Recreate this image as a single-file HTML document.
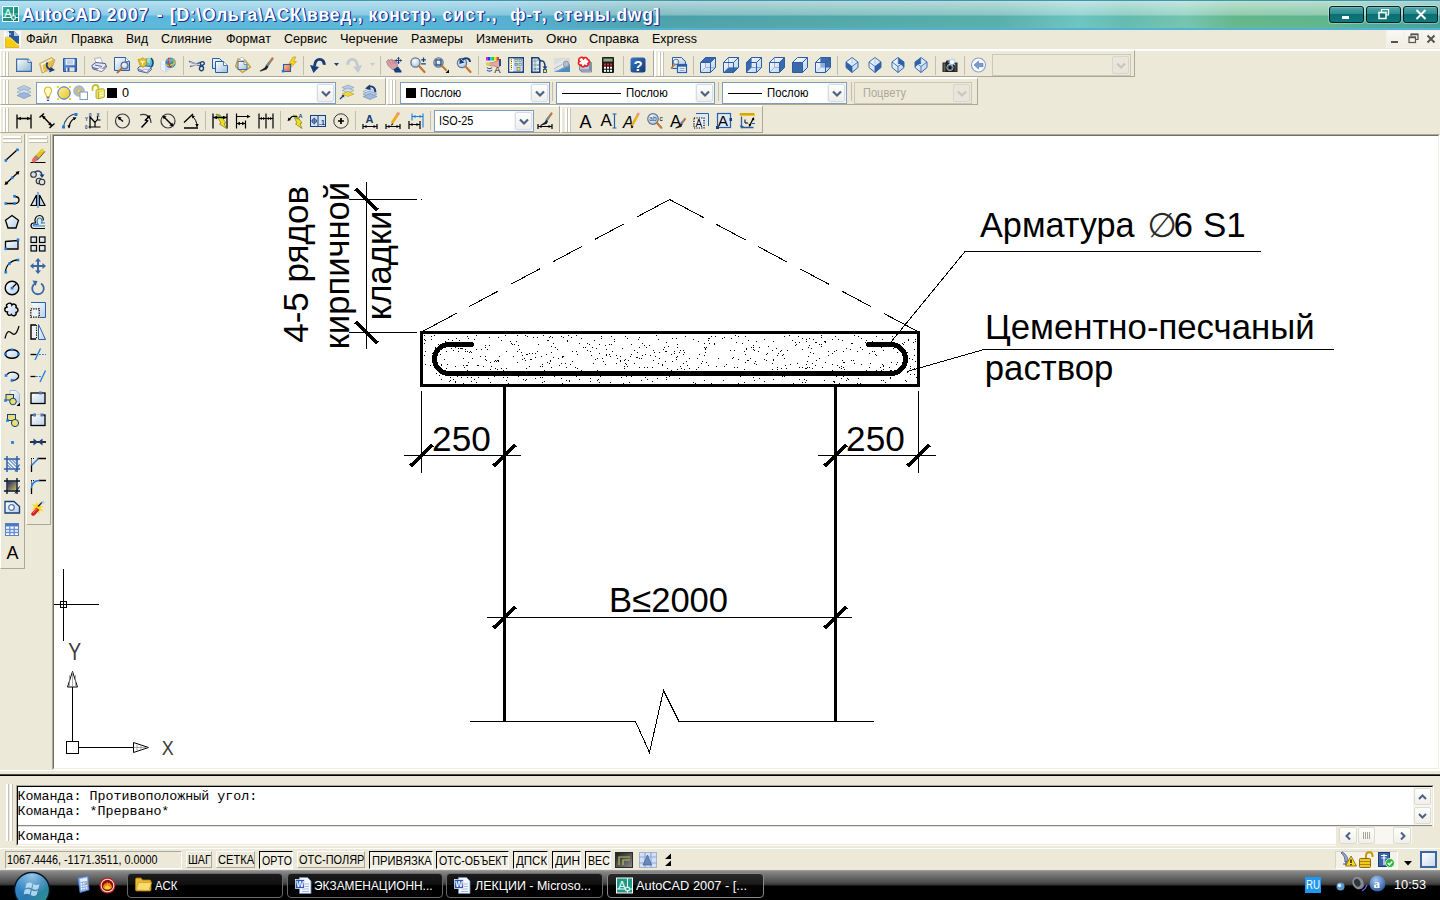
<!DOCTYPE html>
<html lang="ru"><head><meta charset="utf-8"><title>AutoCAD 2007</title><style>
html,body{margin:0;padding:0}
body{width:1440px;height:900px;overflow:hidden;background:#ece9d8;font-family:"Liberation Sans",sans-serif;position:relative;color:#000}
div,span,svg{position:absolute}
.t{white-space:pre;transform-origin:0 0;line-height:1;font-kerning:none}
.i{overflow:visible}
.tb{box-sizing:border-box;border-top:1px solid #fff;border-left:1px solid #fff;border-right:1px solid #aca899;border-bottom:1px solid #aca899}
.gv{width:2px;background:#fff;border-right:1px solid #c5c2b2;box-sizing:content-box}
.gh{height:2px;background:#fff;border-bottom:1px solid #c5c2b2;border-right:1px solid #c5c2b2}
.sep{width:1px;background:#c0bdac}
.combo{box-sizing:border-box;border:1px solid #7f9db9;background:#fff}
.dd{box-sizing:border-box;border:1px solid #d4dcec;border-radius:2px;background:linear-gradient(#fdfdfd,#f0efe8);box-shadow:0 0 0 1px #f4f4f0}
.dis{border-color:#c9c7ba;background:#ece9d8}
.sb{box-sizing:border-box;height:17px;top:851px;border:1px solid;border-color:#fff #aca899 #aca899 #fff}
.sbp{box-sizing:border-box;height:18px;top:851px;border:1px solid;border-color:#000 #fff #fff #000;background:#f3f1e6}
.tk{box-sizing:border-box;top:3px;height:25px;border:1px solid #6a6a6a;border-radius:4px;background:linear-gradient(#1c1c1c 0,#101010 45%,#000 50%,#000 100%)}
</style></head><body>
<svg width="0" height="0" style="position:absolute"><defs>
<linearGradient id="gpg" x1="0" y1="0" x2="1" y2="1"><stop offset="0" stop-color="#fff"/><stop offset="1" stop-color="#9fc0d8"/></linearGradient>
<linearGradient id="gbl" x1="0" y1="0" x2="1" y2="1"><stop offset="0" stop-color="#7fa8e0"/><stop offset="1" stop-color="#1f4f9a"/></linearGradient>
<linearGradient id="gye" x1="0" y1="0" x2="1" y2="1"><stop offset="0" stop-color="#fff3a0"/><stop offset="1" stop-color="#e8c020"/></linearGradient>
<linearGradient id="gfo" x1="0" y1="0" x2="1" y2="1"><stop offset="0" stop-color="#f8e08a"/><stop offset="1" stop-color="#c89a30"/></linearGradient>
<linearGradient id="gcu" x1="0" y1="0" x2="1" y2="1"><stop offset="0" stop-color="#ffffff"/><stop offset="1" stop-color="#b8d0ea"/></linearGradient>
<radialGradient id="ggl" cx="0.4" cy="0.35" r="0.7"><stop offset="0" stop-color="#ffffff"/><stop offset="1" stop-color="#9fc4e8"/></radialGradient>
<linearGradient id="gor" x1="0" y1="0" x2="1" y2="1"><stop offset="0" stop-color="#ffc0a0"/><stop offset="1" stop-color="#e86030"/></linearGradient>
<linearGradient id="ghl" x1="0" y1="0" x2="1" y2="1"><stop offset="0" stop-color="#3a78c8"/><stop offset="1" stop-color="#10386e"/></linearGradient>
</defs></svg>
<div id="titlebar" style="left:0;top:0;width:1440px;height:30px;background:linear-gradient(to bottom,#3d97ad 0,#3d97ad 1px,rgba(255,255,255,.62) 1px,rgba(255,255,255,.55) 2px,rgba(255,255,255,.30) 15px,rgba(255,255,255,0) 16px,rgba(255,255,255,.04) 28px,#4fb2d2 28px,#4fb2d2 30px),linear-gradient(to right,#5cb8dc 0,#58b5d8 350px,#52aed0 520px,#4aa0aa 650px,#50a6a8 800px,#56aeaa 1000px,#6cc4c0 1080px,#62baae 1125px,#72c4b0 1185px,#62b68a 1235px,#5cb48c 1330px,#4aaa9a 1370px,#3f9e98 1440px)">
<svg class="i" style="left:2px;top:6px" width="17" height="16" viewBox="0 0 17 16"><defs><linearGradient id="gap" x1="0" y1="0" x2="1" y2="1"><stop offset="0" stop-color="#2ab8a0"/><stop offset="1" stop-color="#0c7464"/></linearGradient></defs><rect x="0.5" y="0.5" width="16" height="15" fill="url(#gap)" stroke="#fff"/><path d="M1 8h15" stroke="#fff" stroke-width=".8" opacity=".7"/><text x="2.200" y="11" font-size="11" fill="#e8fff6" font-family="Liberation Sans,sans-serif">A</text><path d="M11.500 1v14M1 11.500h15" stroke="#fff" stroke-width="1"/><rect x="9.800" y="9.800" width="3.400" height="3.400" fill="#1f9a88" stroke="#fff" stroke-width=".9"/></svg>
<span class="t" style="left:21.7px;top:6.69px;font-size:17.5px;color:#fff;font-weight:bold;text-shadow:1px 1px 0 #1a2a96,1px 0 0 #1a2a96"><span style="position:static;letter-spacing:0.191px">AutoCAD</span><span style="position:static;display:inline-block;width:5.90px"> </span><span style="position:static;letter-spacing:0.868px">2007</span><span style="position:static;display:inline-block;width:7.60px"> </span><span style="position:static;letter-spacing:1.572px">-</span><span style="position:static;display:inline-block;width:5.90px"> </span><span style="position:static;letter-spacing:0.689px">[D:\Ольга\АСК\введ.,</span><span style="position:static;display:inline-block;width:5.20px"> </span><span style="position:static;letter-spacing:0.647px">констр.</span><span style="position:static;display:inline-block;width:5.60px"> </span><span style="position:static;letter-spacing:1.147px">сист.,</span><span style="position:static;display:inline-block;width:12.40px">  </span><span style="position:static;letter-spacing:0.632px">ф-т,</span><span style="position:static;display:inline-block;width:6.20px"> </span><span style="position:static;letter-spacing:0.747px">стены.dwg]</span></span>
<div style="left:1329px;top:6px;width:35px;height:17px;box-sizing:border-box;border:1px solid #06201f;border-radius:3px;background:linear-gradient(#8cc8c8 0,#4aa4a6 8%,#2f8e90 45%,#0b6e72 50%,#0f777a 100%);box-shadow:0 0 0 1px rgba(255,255,255,.3)"><div style="left:12px;top:9px;width:7px;height:3px;background:#fff"></div></div>
<div style="left:1366px;top:6px;width:35px;height:17px;box-sizing:border-box;border:1px solid #06201f;border-radius:3px;background:linear-gradient(#8cc8c8 0,#4aa4a6 8%,#2f8e90 45%,#0b6e72 50%,#0f777a 100%);box-shadow:0 0 0 1px rgba(255,255,255,.3)"><svg class="i" style="left:11px;top:2px" width="12" height="11" viewBox="0 0 12 11"><path d="M3.500 3v-2.500h7v5.500h-2.500" fill="none" stroke="#fff" stroke-width="1.200"/><rect x="1" y="3.500" width="7" height="6" fill="none" stroke="#fff" stroke-width="1.500"/></svg></div>
<div style="left:1403px;top:6px;width:35px;height:17px;box-sizing:border-box;border:1px solid #06201f;border-radius:3px;background:linear-gradient(#8cc8c8 0,#4aa4a6 8%,#2f8e90 45%,#0b6e72 50%,#0f777a 100%);box-shadow:0 0 0 1px rgba(255,255,255,.3)"><svg class="i" style="left:11px;top:2px" width="12" height="11" viewBox="0 0 12 11"><path d="M1.500 1l9 9M10.500 1l-9 9" stroke="#fff" stroke-width="2"/></svg></div>
</div>
<div id="menubar" style="left:0;top:30px;width:1440px;height:20px">
<div style="left:4px;top:1px;width:17px;height:17px;background:#fbfaf6"></div><svg class="i" style="left:5px;top:1px" width="16" height="17" viewBox="0 0 16 17"><path d="M1 0h8l5 5v7h-13z" fill="#dfe6f2"/><path d="M3 0h6l5 5v8l-9-3z" fill="#2a5a9c"/><path d="M9 0l5 5h-5z" fill="#b8c8e0"/><path d="M0.500 6.500l5 0 8.500 8v2h-13.500z" fill="#f4cc10" stroke="#c89808" stroke-width=".6"/><path d="M1 7l4.500 0 8 7.500" fill="none" stroke="#fff2a0" stroke-width=".8"/><path d="M3.500 0.500v5M1 3h5" stroke="#fff" stroke-width="1"/></svg>
<span class="t " style="left:26.20px;top:1.70px;font-size:13px;transform:scaleX(0.9699);">Файл</span>
<span class="t " style="left:71.20px;top:1.70px;font-size:13px;transform:scaleX(0.9627);">Правка</span>
<span class="t " style="left:126.20px;top:1.70px;font-size:13px;transform:scaleX(0.9354);">Вид</span>
<span class="t " style="left:161.20px;top:1.70px;font-size:13px;transform:scaleX(0.9632);">Слияние</span>
<span class="t " style="left:226.20px;top:1.70px;font-size:13px;transform:scaleX(0.9684);">Формат</span>
<span class="t " style="left:284.20px;top:1.70px;font-size:13px;transform:scaleX(0.9659);">Сервис</span>
<span class="t " style="left:340.20px;top:1.70px;font-size:13px;transform:scaleX(0.9864);">Черчение</span>
<span class="t " style="left:411.20px;top:1.70px;font-size:13px;transform:scaleX(0.9523);">Размеры</span>
<span class="t " style="left:476.20px;top:1.70px;font-size:13px;transform:scaleX(0.9720);">Изменить</span>
<span class="t " style="left:546.20px;top:1.70px;font-size:13px;transform:scaleX(1.0262);">Окно</span>
<span class="t " style="left:589.20px;top:1.70px;font-size:13px;transform:scaleX(0.9859);">Справка</span>
<span class="t " style="left:652.20px;top:1.70px;font-size:13px;transform:scaleX(0.9582);">Express</span>
<div style="left:1387px;top:1px;width:16px;height:16px;background:linear-gradient(#f9f8f3,#f0eee3);box-shadow:0 0 0 1px #f4f2e8"><div style="left:4px;top:10px;width:7px;height:2px;background:#55554c"></div></div>
<div style="left:1405px;top:1px;width:16px;height:16px;background:linear-gradient(#f9f8f3,#f0eee3);box-shadow:0 0 0 1px #f4f2e8"><svg class="i" style="left:3px;top:2px" width="11" height="11" viewBox="0 0 11 11"><path d="M3 3v-2h7v5.500h-2" fill="none" stroke="#55554c" stroke-width="1.200"/><path d="M3 1.500h7" stroke="#55554c" stroke-width="1.500"/><rect x="1" y="4" width="6.500" height="5.500" fill="none" stroke="#55554c" stroke-width="1.200"/><path d="M1 4.500h6.500" stroke="#55554c" stroke-width="1.500"/></svg></div>
<div style="left:1423px;top:1px;width:16px;height:16px;background:linear-gradient(#f9f8f3,#f0eee3);box-shadow:0 0 0 1px #f4f2e8"><svg class="i" style="left:3px;top:3px" width="10" height="10" viewBox="0 0 10 10"><path d="M1.500 1.500l7 7M8.500 1.500l-7 7" stroke="#55554c" stroke-width="2"/></svg></div>
</div>
<div style="left:0;top:49px;width:1440px;height:2px;background:#fff"></div>
<div class="tb" style="left:0;top:50px;width:654px;height:27px"></div>
<div class="gv" style="left:3px;top:52px;height:24px"></div><div class="gv" style="left:6px;top:52px;height:24px"></div>
<svg class="i" style="left:16px;top:57px" width="16" height="16" viewBox="0 0 16 16"><defs><linearGradient id="gnw" x1="0" y1="0" x2="1" y2="1"><stop offset="0" stop-color="#fff"/><stop offset="1" stop-color="#8fb4c6"/></linearGradient></defs><path d="M0.600 2.100h11.400l3.400 3.400v8.900h-14.800z" fill="url(#gnw)" stroke="#3a6cb0" stroke-width="1.200"/><path d="M12 2.100v3.400h3.400" fill="#fff" stroke="#3a6cb0" stroke-width=".9"/></svg>
<svg class="i" style="left:39px;top:57px" width="16" height="16" viewBox="0 0 16 16"><path d="M0.500 6.500l12-6 3.500 2.500-3.500 9-9.500 4z" fill="url(#gfo)" stroke="#c09a38" stroke-width=".7"/><path d="M2 7l10.500-5.200 1 .8-10 5.500 1.500 6.500-1 .6z" fill="#f4f8fc"/><path d="M3.500 8.500l10-5.500-2.500 8.500-6 3z" fill="#e8c050"/><path d="M8.500 5.500c-2 2.500-.5 6 3 7" fill="none" stroke="#173d7a" stroke-width="1.900"/><path d="M10 15.500l6-2.500-4.500-3z" fill="#173d7a"/></svg>
<svg class="i" style="left:62px;top:57px" width="16" height="16" viewBox="0 0 16 16"><defs><linearGradient id="gsv" x1="0" y1="0" x2="1" y2="1"><stop offset="0" stop-color="#6aa0e8"/><stop offset="1" stop-color="#2a5cb0"/></linearGradient></defs><path d="M1.500 1.500h13v13h-13z" fill="url(#gsv)" stroke="#2a56a0"/><rect x="3.500" y="2" width="9" height="6" fill="#eef4fb" stroke="#9ab4d8" stroke-width=".6"/><path d="M5 4h6M5 6h6" stroke="#8aa8cc" stroke-width=".9"/><rect x="4" y="10.500" width="8.500" height="4" fill="#f0f0e8"/><rect x="5.500" y="10.500" width="2" height="4" fill="#2a56a0"/><rect x="9" y="11.500" width="2.500" height="2" fill="#d8dcb0"/></svg>
<div class="sep" style="left:84px;top:56px;height:19px"></div>
<svg class="i" style="left:91px;top:57px" width="16" height="16" viewBox="0 0 16 16"><path d="M3.500 1.500l6-1 2 5.500-6 1.500z" fill="#fff" stroke="#9098b8" stroke-width=".7"/><path d="M0.800 8.500l4-3 9.500 1 1.200 3.500-4.500 4.500-9-2.500z" fill="#e4e8f6" stroke="#404c88" stroke-width=".9"/><path d="M1.500 10.500l9 2.500 4.500-4.500" fill="none" stroke="#404c88" stroke-width=".9"/><path d="M4 8l7 1.500" stroke="#404c88" stroke-width=".8"/><path d="M5.500 13l5 1.500 3-2.500-5-1.200z" fill="#fff" stroke="#7078a8" stroke-width=".6"/></svg>
<svg class="i" style="left:114px;top:57px" width="16" height="16" viewBox="0 0 16 16"><path d="M0.5 0.5h11l4 4v9h-15z" fill="url(#gpg)" stroke="#2a5ea8"/><path d="M11.5 0.5v4h4" fill="#fff" stroke="#2a5ea8" stroke-width=".8"/><circle cx="10.5" cy="8.5" r="3.4" fill="url(#ggl)" stroke="#5a6a90" stroke-width="1.2"/><path d="M8 11.2l-4.5 4.3" stroke="#b8703a" stroke-width="2" stroke-linecap="round"/></svg>
<svg class="i" style="left:137px;top:57px" width="16" height="16" viewBox="0 0 16 16"><circle cx="11.500" cy="5.500" r="4.800" fill="#58b8d8"/><path d="M9 2c2-1.500 4-1.500 5.500 0-1 1.500-2 2-1.500 4-1.500 1-3.500-1.500-4-4z" fill="#a0e0c0"/><path d="M14 1.200c3 2.500 2.500 7 0 9" fill="none" stroke="#10506a" stroke-width="1.600"/><path d="M0.800 11l3.500-2.500 9 1 1.200 3-4 3.500-9-2z" fill="#e4e8f6" stroke="#404c88" stroke-width=".9"/><path d="M1.500 12.500l8.500 2 4-3.500" fill="none" stroke="#404c88" stroke-width=".8"/><path d="M5 14l4.500 1.300 2.500-2-4.500-1z" fill="#fff" stroke="#7078a8" stroke-width=".6"/><path d="M1 2.500l3-.5 1.500-1.500 1.500 1.500 2.500 0 -.5 6-3 2.500-3-2z" fill="#e8c020" stroke="#a88810" stroke-width=".6"/><path d="M4 4l1.500 1.500 2-1.500M5.500 5.500v2" stroke="#fff" stroke-width="1.100" fill="none"/></svg>
<svg class="i" style="left:160px;top:57px" width="16" height="16" viewBox="0 0 16 16"><path d="M0.500 5.500l5 2.500v7.500l-5-3z" fill="#eef2fa" stroke="#c0c8d8" stroke-width=".5"/><path d="M5.500 8l5-2v6.500l-5 3z" fill="#cfd8e8"/><path d="M0.500 5.500l5-2 5 2.500-5 2z" fill="#fafbfd"/><circle cx="10.500" cy="5.800" r="5.300" fill="#2f90c8"/><path d="M7 2.500c2-1.500 5-1.500 7 .5-1 1.500-3 .5-3.500 2.500s-2.500 0-3.500-3z" fill="#58a8d8"/><path d="M5.500 7.500c3 2 8 .5 10-2.500" fill="none" stroke="#e8d020" stroke-width="1.100"/><path d="M9 0.800c-1.500 3-.5 7.500 2 9.800" fill="none" stroke="#e03030" stroke-width="1.200"/><path d="M6 3.500c3-1 7 0 9.500 3" fill="none" stroke="#e89030" stroke-width=".9"/><path d="M13 1.200c2 3 1 7-1 9" fill="none" stroke="#e8d020" stroke-width=".9"/></svg>
<div class="sep" style="left:183px;top:56px;height:19px"></div>
<svg class="i" style="left:189px;top:57px" width="16" height="16" viewBox="0 0 16 16"><path d="M0.500 4.500l11 4.500M1.500 9.500l9.500-4" stroke="#5a6a98" stroke-width="1.500" stroke-linecap="round"/><path d="M1 4.800l7 2.800M2 9.200l6-2.500" stroke="#e8ecf6" stroke-width=".6"/><ellipse cx="13.300" cy="6.500" rx="2" ry="1.700" fill="none" stroke="#173d7a" stroke-width="1.300" transform="rotate(-20 13.300 6.500)"/><ellipse cx="12.500" cy="11.500" rx="2" ry="2.200" fill="none" stroke="#173d7a" stroke-width="1.300" transform="rotate(20 12.500 11.500)"/></svg>
<svg class="i" style="left:212px;top:57px" width="16" height="16" viewBox="0 0 16 16"><path d="M0.5 1.5h7l3 3v7h-10z" fill="url(#gpg)" stroke="#2a5ea8"/><path d="M3.5 4.5h8l4 4v7h-12z" fill="url(#gpg)" stroke="#2a5ea8"/><path d="M11.5 4.5v4h4" fill="#fff" stroke="#2a5ea8" stroke-width=".8"/></svg>
<svg class="i" style="left:235px;top:57px" width="16" height="16" viewBox="0 0 16 16"><path d="M3 2l7 1 5.5 7-8 5.5-7-6z" fill="#f0dc98" stroke="#c09a38" stroke-width="1.2"/><path d="M4.5 1.5l3-1.5 2 2.5-3 1.5z" fill="#fff" stroke="#a0a0a0" stroke-width=".6"/><path d="M3 4.5h6l3 3v5h-9z" fill="url(#gpg)" stroke="#2a5ea8" stroke-width=".9"/><path d="M9 4.5v3h3" fill="#fff" stroke="#2a5ea8" stroke-width=".6"/></svg>
<svg class="i" style="left:258px;top:57px" width="16" height="16" viewBox="0 0 16 16"><path d="M14.5 1.5l-6 8" stroke="#b8784a" stroke-width="2.4" stroke-linecap="round"/><path d="M11.5 5.5l-3 4" stroke="#5a8ac0" stroke-width="2.4"/><path d="M8.8 8.2l-2.3 2.6-5 3.2 1 .5 6-2 2-2.8z" fill="#202020"/></svg>
<svg class="i" style="left:281px;top:57px" width="16" height="16" viewBox="0 0 16 16"><path d="M12 0l3 0-2.5 4.5 3 0-7 7.5 2.5-5.5-3 0z" fill="#f8d820" stroke="#b89010" stroke-width=".6"/><rect x="2.5" y="7.5" width="7" height="7" fill="url(#gor)" stroke="#2a5ea8" stroke-width="1.1"/><rect x="0.8" y="12.8" width="2.6" height="2.6" fill="#1c7ae0"/></svg>
<div class="sep" style="left:303px;top:56px;height:19px"></div>
<svg class="i" style="left:310px;top:57px" width="16" height="16" viewBox="0 0 16 16"><path d="M14 7.500c.5-6-8.500-8-9.500 1.500" fill="none" stroke="#173d7a" stroke-width="2.800"/><path d="M0 8l9 2-5.500 6z" fill="#173d7a"/><path d="M15.700 8c0-3.500-1.500-5.500-4-6.500 1.500 1.500 2 3.500 1.500 6z" fill="#173d7a"/></svg>
<svg class="i" style="left:346px;top:57px" width="16" height="16" viewBox="0 0 16 16"><path d="M2 7.500c-.5-6 8.500-8 9.500 1.500" fill="none" stroke="#c4c8d2" stroke-width="2.800"/><path d="M16 8l-9 2 5.500 6z" fill="#c4c8d2"/><path d="M0.300 8c0-3.500 1.500-5.500 4-6.500-1.500 1.500-2 3.500-1.500 6z" fill="#c4c8d2"/></svg>
<div class="sep" style="left:380px;top:56px;height:19px"></div>
<svg class="i" style="left:386px;top:57px" width="16" height="16" viewBox="0 0 16 16"><path d="M0.500 4.500l2-2 1.500 1 1.500-1.500 2 1.500 1.500-.5 2.500 4.500-1 4.500-4 .5-4.500-4z" fill="#d8a0a8" stroke="#a06878" stroke-width=".7"/><path d="M2.500 3.500l3 4M5.500 2.500l2 4.500M8 3.500l1.500 3.500" stroke="#a87080" stroke-width=".6"/><path d="M7.500 12.500l4.500-3 3.500 4.500v1.500h-6.500z" fill="#173d7a"/><path d="M12.500 0.500v6M9.500 3.500h6" stroke="#173d7a" stroke-width="1"/><path d="M12.500 0l1.500 1.800h-3zM12.500 7l1.500-1.800h-3zM9 3.500l1.800-1.500v3zM16 3.500l-1.800-1.500v3z" fill="#173d7a"/></svg>
<svg class="i" style="left:410px;top:57px" width="16" height="16" viewBox="0 0 16 16"><circle cx="5.500" cy="5.500" r="4.600" fill="url(#ggl)" stroke="#6a7690" stroke-width="1.300"/><path d="M9 9l5.500 6" stroke="#c07838" stroke-width="2.200" stroke-linecap="round"/><path d="M13.500 0.500v4.500M11.200 2.800h4.600M11.200 6.800h4.600" stroke="#173d7a" stroke-width="1.200"/></svg>
<svg class="i" style="left:433px;top:57px" width="16" height="16" viewBox="0 0 16 16"><circle cx="5.500" cy="5.500" r="4.600" fill="url(#ggl)" stroke="#6a7690" stroke-width="1.300"/><rect x="3" y="3" width="5" height="5" fill="none" stroke="#173d7a" stroke-width="1.200"/><path d="M9 9l4 4" stroke="#c07838" stroke-width="2.200" stroke-linecap="round"/><path d="M16 12.500v3.500h-3.500z" fill="#000"/></svg>
<svg class="i" style="left:456px;top:57px" width="16" height="16" viewBox="0 0 16 16"><circle cx="6" cy="6" r="4.600" fill="url(#ggl)" stroke="#6a7690" stroke-width="1.300"/><path d="M9.500 9.500l5 5.500" stroke="#c07838" stroke-width="2.200" stroke-linecap="round"/><path d="M14 5c0-4-5-5-7.500-2" fill="none" stroke="#173d7a" stroke-width="2"/><path d="M3.500 1l0 6 5-1.500z" fill="#173d7a"/></svg>
<div class="sep" style="left:478px;top:56px;height:19px"></div>
<svg class="i" style="left:485px;top:57px" width="16" height="16" viewBox="0 0 16 16"><rect x="1" y="0" width="2" height="3.500" fill="#e020e0"/><rect x="3" y="0" width="2" height="3.500" fill="#3030f0"/><rect x="5" y="0" width="2" height="3.500" fill="#20d0e0"/><rect x="7" y="0" width="2" height="3.500" fill="#20d020"/><rect x="9" y="0" width="2.500" height="3.500" fill="#f0e020"/><rect x="11.500" y="0" width="2.500" height="3.500" fill="#f04020"/><path d="M15 3l-7 2.500-4 .5v2.500l5 .5 4 1.500 2-1z" fill="#e8a8a0" stroke="#a86868" stroke-width=".6"/><rect x="14" y="2" width="2" height="7" fill="#2a4a90"/><rect x="1" y="5.500" width="4" height="3" fill="#d8d048"/><path d="M2 10.500c1 1.500 4 1.500 5 0M2 13c1 1.500 4 1.500 5 0" fill="none" stroke="#3a5aa0" stroke-width="1.200"/><text x="9.300" y="15.800" font-size="9.500" fill="#202020" font-family="Liberation Sans,sans-serif">A</text></svg>
<svg class="i" style="left:508px;top:57px" width="16" height="16" viewBox="0 0 16 16"><rect x="0.800" y="0.800" width="14.400" height="14.400" fill="#dfe9f6" stroke="#173d7a" stroke-width="1.500"/><rect x="1.500" y="1.500" width="3.500" height="13" fill="#fff"/><path d="M3.500 2v12" stroke="#202020" stroke-width=".8" stroke-dasharray="1 1"/><rect x="2.300" y="2.500" width="1.500" height="1.500" fill="#f0d020"/><rect x="2.300" y="5.500" width="1.500" height="1.500" fill="#f0d020"/><rect x="2.300" y="8.500" width="1.500" height="1.500" fill="#f0d020"/><rect x="2.300" y="11.500" width="1.500" height="1.500" fill="#f0d020"/><rect x="6" y="2" width="8.500" height="12" fill="#c9d8ec"/><rect x="7" y="2.500" width="2.200" height="2.200" fill="#f4f080" stroke="#406090" stroke-width=".5"/><rect x="11" y="2.500" width="2.200" height="2.200" fill="#f4f080" stroke="#406090" stroke-width=".5"/><rect x="7" y="6.500" width="2.200" height="2.200" fill="#80e0c0" stroke="#406090" stroke-width=".5"/><rect x="11" y="6.500" width="2.200" height="2.200" fill="#f4f080" stroke="#406090" stroke-width=".5"/><rect x="9" y="10.500" width="3" height="3" fill="#f4e040" stroke="#406090" stroke-width=".5"/></svg>
<svg class="i" style="left:531px;top:57px" width="16" height="16" viewBox="0 0 16 16"><path d="M0.800 0.800h6.500l1.500 2v12.400h-8z" fill="#dfe9f6" stroke="#173d7a" stroke-width="1.500"/><rect x="3" y="3" width="2" height="2" fill="#f4f080" stroke="#406090" stroke-width=".5"/><rect x="3" y="7" width="2" height="2" fill="#f4f080" stroke="#406090" stroke-width=".5"/><rect x="3" y="11" width="2" height="2" fill="#80e0c0" stroke="#406090" stroke-width=".5"/><path d="M6 3h2M6 8h2M6 12h2" stroke="#406090" stroke-width=".8"/><path d="M9 4c4-1 5 2 5 6" fill="none" stroke="#173d7a" stroke-width="1.500"/><path d="M11.500 9.500h5l-2.500 3z" fill="#173d7a"/><rect x="12.500" y="12.500" width="3" height="3" fill="#f4e860" stroke="#173d7a" stroke-width=".8"/></svg>
<svg class="i" style="left:554px;top:57px" width="16" height="16" viewBox="0 0 16 16"><rect x="0" y="1" width="16" height="14" fill="#6a9cc4"/><path d="M0 1h16v6l-16 8z" fill="#d8dce0"/><path d="M0 8l10-5.500 4 1.500v3l-10 6-4-1.500z" fill="#e4e6ea"/><ellipse cx="12" cy="7" rx="2.800" ry="3" fill="#b8bcc4" stroke="#888c98" stroke-width=".8"/><path d="M0 12l8-4.500" stroke="#a0a4b0" stroke-width=".8"/><path d="M3 15l13-6v6z" fill="#4a8cc0"/></svg>
<svg class="i" style="left:577px;top:57px" width="16" height="16" viewBox="0 0 16 16"><path d="M4.500 5.500h10v9.500h-10z" fill="#e8e8f0" stroke="#707890" stroke-width=".8"/><path d="M3.500 4.500h10v9.500h-10z" fill="#d8dcec" stroke="#707890" stroke-width=".8"/><path d="M2.500 3.500h10v9.500h-10z" fill="#b8c8e8" stroke="#707890" stroke-width=".8"/><path d="M3 1c1.500-1.500 3-.5 3.500.5 1-1.500 4-1 4 1 2 0 2.500 3 .5 4 1 2-1.500 3.500-3 2-1 2-4 1.500-4-.5-2.500.5-3.500-2.500-1.500-3.500-1.500-1-.5-3.500.5-3.500z" fill="#fff" stroke="#e82020" stroke-width="1.700"/></svg>
<svg class="i" style="left:600px;top:57px" width="16" height="16" viewBox="0 0 16 16"><rect x="2" y="0" width="12" height="16" rx="1" fill="#181818"/><rect x="3.500" y="1.500" width="9" height="3" fill="#90a888" stroke="#587050" stroke-width=".5"/><rect x="4" y="6.500" width="2" height="2" fill="#f02020"/><rect x="7" y="6.500" width="2" height="2" fill="#f02020"/><rect x="10" y="6.500" width="2" height="2" fill="#f02020"/><rect x="4" y="9.700" width="2" height="2" fill="#fff"/><rect x="7" y="9.700" width="2" height="2" fill="#fff"/><rect x="10" y="9.700" width="2" height="2" fill="#fff"/><rect x="4" y="12.800" width="2" height="2" fill="#fff"/><rect x="7" y="12.800" width="2" height="2" fill="#fff"/><rect x="10" y="12.800" width="2" height="2" fill="#fff"/></svg>
<div class="sep" style="left:623px;top:56px;height:19px"></div>
<svg class="i" style="left:630px;top:57px" width="16" height="16" viewBox="0 0 16 16"><rect x="0.500" y="0.500" width="15" height="15" rx="2.500" fill="url(#ghl)"/><text x="3.600" y="13.600" font-size="15" font-weight="bold" fill="#fff" font-family="Liberation Sans,sans-serif">?</text></svg>
<svg class="i" style="left:334px;top:63px" width="5" height="3" viewBox="0 0 5 3"><path d="M0 0h5l-2.500 3z" fill="#173d7a"/></svg>
<svg class="i" style="left:370px;top:63px" width="5" height="3" viewBox="0 0 5 3"><path d="M0 0h5l-2.500 3z" fill="#c4c8d4"/></svg>
<div class="tb" style="left:654px;top:50px;width:481px;height:27px;border-left-width:2px"></div>
<div class="gv" style="left:658px;top:52px;height:24px"></div><div class="gv" style="left:661px;top:52px;height:24px"></div>
<svg class="i" style="left:671px;top:57px" width="16" height="16" viewBox="0 0 16 16"><path d="M1.500 0.500h9l4 4v7h-13z" fill="url(#gpg)" stroke="#2a5ea8"/><circle cx="5" cy="5" r="2.800" fill="url(#ggl)" stroke="#6a7690" stroke-width="1"/><path d="M3.500 7.500l-3 3.500" stroke="#c07838" stroke-width="1.800" stroke-linecap="round"/><rect x="6.500" y="7.500" width="9" height="8" fill="#e8f0fa" stroke="#2a5ea8" stroke-width="1.200"/><rect x="6.500" y="7.500" width="9" height="2.200" fill="#2a5ea8"/><path d="M8.500 11.500h5M8.500 13.500h5" stroke="#7090c0" stroke-width=".8"/></svg>
<div class="sep" style="left:693px;top:56px;height:19px"></div>
<svg class="i" style="left:700px;top:57px" width="16" height="16" viewBox="0 0 16 16"><path d="M0.500 5.500l5-5h10v10l-5 5h-10z" fill="url(#gcu)"/><path d="M5.500 0.500v10h10M5.500 10.500l-5 5" fill="none" stroke="#8aa8d0" stroke-width=".8"/><path d="M0.500 5.500l5-5h10l-5 5z" fill="#3a6aac"/><path d="M0.500 5.500h10v10h-10zM0.500 5.500l5-5h10l-5 5M15.500 0.500v10l-5 5" fill="none" stroke="#2a5ea8" stroke-width="1" stroke-linejoin="miter"/></svg>
<svg class="i" style="left:723px;top:57px" width="16" height="16" viewBox="0 0 16 16"><path d="M0.500 5.500l5-5h10v10l-5 5h-10z" fill="url(#gcu)"/><path d="M5.500 0.500v10h10M5.500 10.500l-5 5" fill="none" stroke="#8aa8d0" stroke-width=".8"/><path d="M0.500 15.500l5-5h10l-5 5z" fill="#3a6aac"/><path d="M5.500 0.500v10h10M5.500 10.500l-5 5" fill="none" stroke="#7f9cc8" stroke-width=".7"/><path d="M0.500 5.500h10v10h-10zM0.500 5.500l5-5h10l-5 5M15.500 0.500v10l-5 5" fill="none" stroke="#2a5ea8" stroke-width="1" stroke-linejoin="miter"/></svg>
<svg class="i" style="left:746px;top:57px" width="16" height="16" viewBox="0 0 16 16"><path d="M0.500 5.500l5-5h10v10l-5 5h-10z" fill="url(#gcu)"/><path d="M5.500 0.500v10h10M5.500 10.500l-5 5" fill="none" stroke="#8aa8d0" stroke-width=".8"/><path d="M0.500 5.500l5-5v10l-5 5z" fill="#3a6aac"/><path d="M5.500 0.500v10h10M5.500 10.500l-5 5" fill="none" stroke="#7f9cc8" stroke-width=".7"/><path d="M0.500 5.500h10v10h-10zM0.500 5.500l5-5h10l-5 5M15.500 0.500v10l-5 5" fill="none" stroke="#2a5ea8" stroke-width="1" stroke-linejoin="miter"/></svg>
<svg class="i" style="left:769px;top:57px" width="16" height="16" viewBox="0 0 16 16"><path d="M0.500 5.500l5-5h10v10l-5 5h-10z" fill="url(#gcu)"/><path d="M5.500 0.500v10h10M5.500 10.500l-5 5" fill="none" stroke="#8aa8d0" stroke-width=".8"/><path d="M10.500 5.500l5-5v10l-5 5z" fill="#3a6aac"/><path d="M0.500 5.500h10v10h-10zM0.500 5.500l5-5h10l-5 5M15.500 0.500v10l-5 5" fill="none" stroke="#2a5ea8" stroke-width="1" stroke-linejoin="miter"/></svg>
<svg class="i" style="left:792px;top:57px" width="16" height="16" viewBox="0 0 16 16"><path d="M0.500 5.500l5-5h10v10l-5 5h-10z" fill="url(#gcu)"/><path d="M0.500 5.500h10v10h-10z" fill="#3a6aac"/><path d="M0.500 5.500h10v10h-10zM0.500 5.500l5-5h10l-5 5M15.500 0.500v10l-5 5" fill="none" stroke="#2a5ea8" stroke-width="1" stroke-linejoin="miter"/></svg>
<svg class="i" style="left:815px;top:57px" width="16" height="16" viewBox="0 0 16 16"><path d="M0.500 5.500l5-5h10v10l-5 5h-10z" fill="url(#gcu)"/><path d="M5.500 0.500v10h10M5.500 10.500l-5 5" fill="none" stroke="#8aa8d0" stroke-width=".8"/><path d="M5.500 0.500h10v10h-10z" fill="#3a6aac"/><path d="M5.500 0.500v10h10M5.500 10.500l-5 5" fill="none" stroke="#7f9cc8" stroke-width=".7"/><path d="M0.500 5.500h10v10h-10z" fill="#e4eefa" opacity=".5"/><path d="M0.500 5.500h10v10h-10zM0.500 5.500l5-5h10l-5 5M15.500 0.500v10l-5 5" fill="none" stroke="#2a5ea8" stroke-width="1" stroke-linejoin="miter"/></svg>
<div class="sep" style="left:837px;top:56px;height:19px"></div>
<svg class="i" style="left:844.5px;top:57px" width="16" height="16" viewBox="0 0 16 16"><path d="M7 0.500l6 4.500v5.500l-6 5-6-5v-5.500z" fill="url(#gcu)" stroke="#2a5ea8" stroke-width=".9"/><path d="M1 5l6 4.500v6l-6-5z" fill="#2f62a8"/><path d="M1 5l6 4.500 6-4.500M7 9.500v6" fill="none" stroke="#2a5ea8" stroke-width=".8"/><path d="M7 1.500v5" stroke="#9ab4d8" stroke-width=".7"/></svg>
<svg class="i" style="left:867.5px;top:57px" width="16" height="16" viewBox="0 0 16 16"><path d="M7 0.500l6 4.500v5.500l-6 5-6-5v-5.500z" fill="url(#gcu)" stroke="#2a5ea8" stroke-width=".9"/><path d="M13 5l-6 4.500v6l6-5z" fill="#2f62a8"/><path d="M1 5l6 4.500 6-4.500M7 9.500v6" fill="none" stroke="#2a5ea8" stroke-width=".8"/><path d="M7 1.500v5" stroke="#9ab4d8" stroke-width=".7"/></svg>
<svg class="i" style="left:891px;top:57px" width="16" height="16" viewBox="0 0 16 16"><path d="M7 0.500l6 4.500v5.500l-6 5-6-5v-5.500z" fill="url(#gcu)" stroke="#2a5ea8" stroke-width=".9"/><path d="M7 0.500l6 4.500v5.500l-3.500-3.500h-2.500z" fill="#2f62a8"/><path d="M1 5l6 4.500 6-4.500M7 9.500v6" fill="none" stroke="#2a5ea8" stroke-width=".8"/><path d="M7 1.500v5" stroke="#9ab4d8" stroke-width=".7"/></svg>
<svg class="i" style="left:914px;top:57px" width="16" height="16" viewBox="0 0 16 16"><path d="M7 0.500l6 4.500v5.500l-6 5-6-5v-5.500z" fill="url(#gcu)" stroke="#2a5ea8" stroke-width=".9"/><path d="M7 0.500l-6 4.500v5.500l3.500-3.500h2.500z" fill="#2f62a8"/><path d="M1 5l6 4.500 6-4.500M7 9.500v6" fill="none" stroke="#2a5ea8" stroke-width=".8"/><path d="M7 1.500v5" stroke="#9ab4d8" stroke-width=".7"/></svg>
<div class="sep" style="left:935px;top:56px;height:19px"></div>
<svg class="i" style="left:942px;top:57px" width="16" height="16" viewBox="0 0 16 16"><path d="M0.500 5.500h3l1-2h4l1 2h6v9.500h-15z" fill="#202020"/><rect x="1.500" y="6.500" width="2" height="8" fill="#606060"/><rect x="12.500" y="6.500" width="2" height="8" fill="#484848"/><circle cx="8" cy="10.500" r="3.200" fill="#586068" stroke="#b0b8c0" stroke-width=".8"/><circle cx="8" cy="10.500" r="1.500" fill="#101418"/><path d="M10 0l.8 2.700 2.700-1.200-1.200 2.700 2.700.8-2.700.8 1.200 2.700-2.700-1.200-.8 2.700-.8-2.700-2.700 1.200 1.200-2.700-2.700-.8 2.700-.8-1.200-2.700 2.700 1.200z" fill="#a8d4ff"/><circle cx="10" cy="5" r="2" fill="#fff"/></svg>
<div class="sep" style="left:964px;top:56px;height:19px"></div>
<svg class="i" style="left:971px;top:57px" width="16" height="16" viewBox="0 0 16 16"><circle cx="7.500" cy="8" r="7" fill="#fbfcfe" stroke="#8ca4d0" stroke-width="1.200"/><path d="M3 8l4.500-4v2.300h4.500v3.400h-4.500v2.300z" fill="#7a9ac8" stroke="#5a7ab0" stroke-width=".6"/></svg>
<div class="combo dis" style="left:992px;top:54px;width:139px;height:22px"><div class="dd" style="left:119px;top:1px;width:17px;height:18px;background:#e8e6da;border-color:#d8d6ca;box-shadow:none"><svg class="i" style="left:3px;top:5px" width="10" height="8" viewBox="0 0 10 8"><path d="M1 1.500l4 4 4-4" fill="none" stroke="#c9c7ba" stroke-width="2.200"/></svg></div></div>
<div class="tb" style="left:0;top:77px;width:386px;height:28px;border-top-width:2px"></div>
<div class="gv" style="left:3px;top:80px;height:24px"></div><div class="gv" style="left:6px;top:80px;height:24px"></div>
<svg class="i" style="left:16px;top:84px" width="16" height="16" viewBox="0 0 16 16"><path d="M1 4.500l7-3 7 3-7 3z" fill="#b8cce4" stroke="#7f98c0" stroke-width=".6"/><path d="M1 8l7-3 7 3-7 3z" fill="#cfdced" stroke="#7f98c0" stroke-width=".6"/><path d="M1 11.500l7-3 7 3-7 3z" fill="#9fb8dc" stroke="#6f88b8" stroke-width=".6"/></svg>
<div class="combo" style="left:36px;top:82px;width:300px;height:22px"><svg class="i" style="left:6px;top:3px" width="10" height="16" viewBox="0 0 10 16"><path d="M5 1c-3.500 0-5 4.500-2 7.500l.5 2h3l.5-2c3-3 1.500-7.500-2-7.500z" fill="#fffbd0" stroke="#d8b820" stroke-width="1.100"/><path d="M3.500 11.500h3M3.500 13h3" stroke="#7080b0" stroke-width="1.100"/><path d="M4 14.500h2" stroke="#405090" stroke-width="1"/></svg><svg class="i" style="left:20px;top:3px" width="14" height="14" viewBox="0 0 14 14"><rect x="0" y="0" width="2" height="2" fill="#f0d820"/><rect x="12" y="0" width="2" height="2" fill="#f0d820"/><rect x="0" y="12" width="2" height="2" fill="#f0d820"/><rect x="12" y="12" width="2" height="2" fill="#f0d820"/><circle cx="7" cy="7" r="6.200" fill="url(#gye)" stroke="#2a6ac8" stroke-width="1"/></svg><svg class="i" style="left:36px;top:2px" width="15" height="15" viewBox="0 0 15 15"><circle cx="6" cy="6" r="5.800" fill="#9cb8e0"/><circle cx="6" cy="6" r="3.200" fill="none" stroke="#d8c060" stroke-width="1.200"/><path d="M6 0.500v2.500M6 9v2.500M0.500 6h2.500M9 6h2.500M2 2l1.800 1.800M8.200 8.200l1.800 1.800M10 2l-1.800 1.800M3.800 8.200l-1.800 1.800" stroke="#d8c060" stroke-width="1"/><circle cx="6" cy="6" r="1.300" fill="#e8d478"/><rect x="7" y="7" width="7.500" height="7.500" fill="#fff" stroke="#8098c0" stroke-width="1"/></svg><svg class="i" style="left:54px;top:1px" width="15" height="16" viewBox="0 0 15 16"><path d="M1.500 7v-3c0-4 6-4 6 0v1.500" fill="none" stroke="#c8c020" stroke-width="1.800"/><path d="M5 6l6.500-1.500 2 1v7.500l-6 2-2.500-1z" fill="#e8e468" stroke="#a8a018" stroke-width=".8"/><path d="M7.500 7.500v7.500" stroke="#a8a018" stroke-width=".7"/><path d="M8.500 9.500l4-1M8.500 12l4-1" stroke="#fff" stroke-width=".8"/></svg><div style="left:70px;top:5px;width:10px;height:10px;background:#000"></div><span class="t " style="left:85.00px;top:3.92px;font-size:12.5px;transform:scaleX(1.0070);">0</span><div class="dd" style="left:280px;top:1px;width:17px;height:18px;"><svg class="i" style="left:3px;top:5px" width="10" height="8" viewBox="0 0 10 8"><path d="M1 1.500l4 4 4-4" fill="none" stroke="#4d6185" stroke-width="2.200"/></svg></div></div>
<svg class="i" style="left:339px;top:84px" width="16" height="16" viewBox="0 0 16 16"><path d="M3 3.500l6-2.500 6 2.500-6 2.500z" fill="#b8cce4" stroke="#7f98c0" stroke-width=".6"/><path d="M3 6.500l6-2.500 6 2.500-6 2.500z" fill="#cfdced" stroke="#7f98c0" stroke-width=".6"/><path d="M3 10l6-2.500 6 2.500-6 2.500z" fill="#f0d838" stroke="#b8a020" stroke-width=".6"/><path d="M1 15l3.500-3.500" stroke="#173d7a" stroke-width="1.300"/><path d="M2.500 11h2.700v2.700z" fill="#173d7a"/></svg>
<svg class="i" style="left:362px;top:84px" width="16" height="16" viewBox="0 0 16 16"><path d="M1 7.500l7-3 7 3-7 3z" fill="#cfdced" stroke="#7f98c0" stroke-width=".6"/><path d="M1 10l7-3 7 3-7 3z" fill="#b8cce4" stroke="#7f98c0" stroke-width=".6"/><path d="M1 12.500l7-3 7 3-7 3z" fill="#9fb8dc" stroke="#6f88b8" stroke-width=".6"/><path d="M13 8c1-4-3-7-7-5" fill="none" stroke="#173d7a" stroke-width="1.800"/><path d="M3 4.500l5-4 .5 5.500z" fill="#173d7a"/></svg>
<div class="tb" style="left:386px;top:77px;width:592px;height:28px;border-top-width:2px;border-left-width:2px"></div>
<div class="gv" style="left:390px;top:80px;height:24px"></div><div class="gv" style="left:393px;top:80px;height:24px"></div>
<div class="combo" style="left:400px;top:82px;width:150px;height:22px"><div style="left:5px;top:5px;width:10px;height:10px;background:#000"></div><span class="t " style="left:18.80px;top:3.92px;font-size:12.5px;transform:scaleX(0.9017);">Послою</span><div class="dd" style="left:130px;top:1px;width:17px;height:18px;"><svg class="i" style="left:3px;top:5px" width="10" height="8" viewBox="0 0 10 8"><path d="M1 1.500l4 4 4-4" fill="none" stroke="#4d6185" stroke-width="2.200"/></svg></div></div>
<div class="combo" style="left:556px;top:82px;width:159px;height:22px"><div style="left:5px;top:10px;width:59px;height:1px;background:#000"></div><span class="t " style="left:68.50px;top:3.92px;font-size:12.5px;transform:scaleX(0.9104);">Послою</span><div class="dd" style="left:139px;top:1px;width:17px;height:18px;"><svg class="i" style="left:3px;top:5px" width="10" height="8" viewBox="0 0 10 8"><path d="M1 1.500l4 4 4-4" fill="none" stroke="#4d6185" stroke-width="2.200"/></svg></div></div>
<div class="combo" style="left:722px;top:82px;width:125px;height:22px"><div style="left:5px;top:10px;width:34px;height:1px;background:#000"></div><span class="t " style="left:43.70px;top:3.92px;font-size:12.5px;transform:scaleX(0.9060);">Послою</span><div class="dd" style="left:105px;top:1px;width:17px;height:18px;"><svg class="i" style="left:3px;top:5px" width="10" height="8" viewBox="0 0 10 8"><path d="M1 1.500l4 4 4-4" fill="none" stroke="#4d6185" stroke-width="2.200"/></svg></div></div>
<div class="sep" style="left:851px;top:82px;height:19px"></div>
<div class="sep" style="left:552px;top:82px;height:19px"></div>
<div class="sep" style="left:718px;top:82px;height:19px"></div>
<div class="combo dis" style="left:854px;top:82px;width:118px;height:22px"><span class="t " style="left:8.20px;top:3.92px;font-size:12.5px;color:#aca899;transform:scaleX(0.8836);">Поцвету</span><div class="dd" style="left:98px;top:1px;width:17px;height:18px;background:#e8e6da;border-color:#d8d6ca;box-shadow:none"><svg class="i" style="left:3px;top:5px" width="10" height="8" viewBox="0 0 10 8"><path d="M1 1.500l4 4 4-4" fill="none" stroke="#c9c7ba" stroke-width="2.200"/></svg></div></div>
<div class="tb" style="left:0;top:105px;width:560px;height:28px;border-top-width:2px"></div>
<div class="gv" style="left:3px;top:108px;height:24px"></div><div class="gv" style="left:6px;top:108px;height:24px"></div>
<svg class="i" style="left:16px;top:113px" width="16" height="16" viewBox="0 0 16 16"><path d="M1 1.500v14M15 1.500v14M1.500 5.500h13" stroke="#000" stroke-width="1.300" fill="none"/><path d="M1.500 5.500l3.500-1.800v3.600zM14.500 5.500l-3.500-1.800v3.600z" fill="#000"/></svg>
<svg class="i" style="left:39px;top:113px" width="16" height="16" viewBox="0 0 16 16"><path d="M0.500 4.500l4.500-4M10.500 15l5-4.500M3 2.500l10 10.500" stroke="#000" stroke-width="1.400" fill="none"/><path d="M3 2.500l3.800 1.200-2.500 2.500zM13 13l-3.800-1.200 2.500-2.500z" fill="#000"/></svg>
<svg class="i" style="left:62px;top:113px" width="16" height="16" viewBox="0 0 16 16"><path d="M1.500 14c.5-6 5-12 12-13" fill="none" stroke="#3a4660" stroke-width="1.200"/><path d="M7 14.500c.5-4.500 2.500-8 6.500-9.500" fill="none" stroke="#000" stroke-width="1.300"/><path d="M14.500 4.500l-3.800-.3 1.600 3zM7 15.500l-1.600-3.300 3.200.3z" fill="#000"/><rect x="12.500" y="0" width="3" height="3" fill="#1c7ae0"/><rect x="0" y="12.500" width="3" height="3" fill="#1c7ae0"/></svg>
<svg class="i" style="left:85px;top:113px" width="16" height="16" viewBox="0 0 16 16"><path d="M5 3v12.500M3.500 14h12M10 14v-4.500l2-2.500h3.500M5.500 4.500l5 5.500M12.500 3v4" stroke="#000" stroke-width="1.200" fill="none"/><text x="4" y="3.500" font-size="4.500" font-weight="bold" fill="#173d7a" font-family="Liberation Sans,sans-serif">0</text><text x="11.500" y="3.500" font-size="4.500" font-weight="bold" fill="#173d7a" font-family="Liberation Sans,sans-serif">X</text><text x="0" y="8" font-size="4.500" font-weight="bold" fill="#173d7a" font-family="Liberation Sans,sans-serif">Y</text><text x="0" y="15.500" font-size="4.500" font-weight="bold" fill="#173d7a" font-family="Liberation Sans,sans-serif">0</text></svg>
<div class="sep" style="left:107px;top:111px;height:19px"></div>
<svg class="i" style="left:114px;top:113px" width="16" height="16" viewBox="0 0 16 16"><circle cx="8.500" cy="8" r="7" fill="none" stroke="#3a3a3a" stroke-width="1.200"/><path d="M9 8.500l-4-3.500" stroke="#000" stroke-width="1.300"/><path d="M3.500 3.500l4 1-2.500 2.800z" fill="#000"/></svg>
<svg class="i" style="left:137px;top:113px" width="16" height="16" viewBox="0 0 16 16"><path d="M3 2c5-2 11 1 11 8" fill="none" stroke="#3a3a3a" stroke-width="1.200"/><path d="M12 3.500l-3.500 3.500 2 1-6 6.500" fill="none" stroke="#000" stroke-width="1.500"/><path d="M13.500 2l-1 4-2.800-2.500z" fill="#000"/></svg>
<svg class="i" style="left:160px;top:113px" width="16" height="16" viewBox="0 0 16 16"><circle cx="8" cy="8" r="7" fill="none" stroke="#3a3a3a" stroke-width="1.200"/><path d="M4 4l8 8" stroke="#000" stroke-width="1.400"/><path d="M2.500 2.500l4 1-2.800 2.800zM13.500 13.500l-4-1 2.800-2.800z" fill="#000"/></svg>
<svg class="i" style="left:183px;top:113px" width="16" height="16" viewBox="0 0 16 16"><path d="M1 15h14M1 9.500l9-8.500" stroke="#000" stroke-width="1.300" fill="none"/><path d="M9 3c3 2.500 5 6 5 10.500" fill="none" stroke="#000" stroke-width="1"/><path d="M8.500 2l3.500 1.200-2.500 2.200zM14 14.500l-1.700-3.500h3.400z" fill="#000"/></svg>
<div class="sep" style="left:205px;top:111px;height:19px"></div>
<svg class="i" style="left:212px;top:113px" width="16" height="16" viewBox="0 0 16 16"><path d="M1 0.500v15M15 0.500v15M1.500 4.500h13" stroke="#000" stroke-width="1.300" fill="none"/><path d="M1.500 4.500l3.500-1.800v3.600zM14.500 4.500l-3.500-1.800v3.600z" fill="#000"/><path d="M4 1l4 1 6 8-2 .5 2.500 5-7-4.500 1.500-1z" fill="#f0e020" stroke="#787820" stroke-width=".7"/><path d="M4 1l4 1 3 4-4-1z" fill="#88a838"/><path d="M3 4.500h10" stroke="#000" stroke-width="1.200"/></svg>
<svg class="i" style="left:235px;top:113px" width="16" height="16" viewBox="0 0 16 16"><path d="M1.500 0.500v15M10.500 7.500v8M1.500 3.500h13M1.500 10.500h9" stroke="#000" stroke-width="1.200" fill="none"/><path d="M15.500 3.500l-3.500-1.700v3.400zM10.500 10.500l-3.500-1.700v3.400zM1.500 10.500l3.500-1.700v3.400z" fill="#000"/></svg>
<svg class="i" style="left:258px;top:113px" width="16" height="16" viewBox="0 0 16 16"><path d="M1 0.500v15M8 0.500v15M15 0.500v15M1 5.500h14" stroke="#000" stroke-width="1.200" fill="none"/><path d="M1.500 5.500l2.500-1.500v3zM7.500 5.500l-2.500-1.500v3zM8.500 5.500l2.500-1.500v3zM14.500 5.500l-2.500-1.500v3z" fill="#000"/></svg>
<div class="sep" style="left:280px;top:111px;height:19px"></div>
<svg class="i" style="left:287px;top:113px" width="16" height="16" viewBox="0 0 16 16"><path d="M6 2l4 1 5 7-2 .5 2 5-6.500-4.500 1.500-1z" fill="#f0e020" stroke="#787820" stroke-width=".7"/><path d="M6 2l4 1 3 4-4-1z" fill="#88a838"/><path d="M10 3.500h-5l-3.500 3.500" fill="none" stroke="#000" stroke-width="1.200"/><path d="M0.500 8l1-3.500 2.500 2.500z" fill="#000"/><text x="11.500" y="4.500" font-size="5.500" font-weight="bold" fill="#173d7a" font-family="Liberation Sans,sans-serif">A</text></svg>
<svg class="i" style="left:310px;top:113px" width="16" height="16" viewBox="0 0 16 16"><rect x="0.500" y="2.500" width="15" height="11" fill="#d4e4f6" stroke="#173d7a" stroke-width="1"/><path d="M8 2.500v11" stroke="#173d7a" stroke-width="1"/><circle cx="4.200" cy="8" r="2.200" fill="none" stroke="#173d7a" stroke-width=".9"/><path d="M4.200 4.500v7M1.500 8h5.500" stroke="#173d7a" stroke-width=".8"/><text x="9" y="11.500" font-size="7" font-weight="bold" fill="#173d7a" font-family="Liberation Sans,sans-serif">.1</text></svg>
<svg class="i" style="left:333px;top:113px" width="16" height="16" viewBox="0 0 16 16"><circle cx="8" cy="8" r="7.200" fill="none" stroke="#3a3a3a" stroke-width="1"/><path d="M8 5v6M5 8h6" stroke="#000" stroke-width="1.700"/></svg>
<div class="sep" style="left:355px;top:111px;height:19px"></div>
<svg class="i" style="left:362px;top:113px" width="16" height="16" viewBox="0 0 16 16"><path d="M1 11v5M15 11v5M1.500 13.500h13" stroke="#000" stroke-width="1.200" fill="none"/><path d="M1.500 13.500l3-1.600v3.200zM14.500 13.500l-3-1.600v3.200z" fill="#000"/><text x="3.500" y="9.500" font-size="11" font-weight="bold" fill="#173d7a" font-family="Liberation Sans,sans-serif">A</text></svg>
<svg class="i" style="left:385px;top:113px" width="16" height="16" viewBox="0 0 16 16"><path d="M1 11v5M15 11v5M1.500 13.500h13" stroke="#000" stroke-width="1.200" fill="none"/><path d="M1.500 13.500l3-1.600v3.200zM14.500 13.500l-3-1.600v3.200z" fill="#000"/><path d="M13 1l-6 9" stroke="#e8b020" stroke-width="3"/><path d="M7 10l-1.300 3 2.800-1.800z" fill="#302010"/><path d="M14 -.5l-1.500 2.200" stroke="#f09090" stroke-width="3"/></svg>
<svg class="i" style="left:408px;top:113px" width="16" height="16" viewBox="0 0 16 16"><path d="M1 8v8M12 8v8M1.500 11.500h10" stroke="#000" stroke-width="1.200" fill="none"/><path d="M1.500 11.500l3-1.600v3.200zM11.500 11.500l-3-1.600v3.200z" fill="#000"/><path d="M4 0.500v7M15 0.500v14M4.500 3.500h10" stroke="#1c7ae0" stroke-width="1.100" fill="none"/><path d="M4.500 3.500l3-1.600v3.200zM14.500 3.500l-3-1.600v3.200z" fill="#1c7ae0"/></svg>
<div class="sep" style="left:430px;top:111px;height:19px"></div>
<svg class="i" style="left:537px;top:113px" width="16" height="16" viewBox="0 0 16 16"><path d="M1 11v5M15 11v5M1.500 13.500h13" stroke="#000" stroke-width="1.200" fill="none"/><path d="M1.500 13.500l3-1.600v3.200zM14.500 13.500l-3-1.600v3.200z" fill="#000"/><path d="M14.500 0.500l-5 7" stroke="#b8784a" stroke-width="2.200" stroke-linecap="round"/><path d="M11.500 4.500l-2 3" stroke="#5a8ac0" stroke-width="2.200"/><path d="M9.500 7l-2 2.300-4 2.700 1 .5 5-1.500 1.500-2.500z" fill="#202020"/></svg>
<div class="combo" style="left:434px;top:110px;width:100px;height:22px"><span class="t " style="left:3.80px;top:3.92px;font-size:12.5px;transform:scaleX(0.8662);">ISO-25</span><div class="dd" style="left:80px;top:1px;width:17px;height:18px;"><svg class="i" style="left:3px;top:5px" width="10" height="8" viewBox="0 0 10 8"><path d="M1 1.500l4 4 4-4" fill="none" stroke="#4d6185" stroke-width="2.200"/></svg></div></div>
<div class="tb" style="left:560px;top:105px;width:203px;height:28px;border-top-width:2px;border-left-width:2px"></div>
<div class="gv" style="left:565px;top:108px;height:24px"></div><div class="gv" style="left:568px;top:108px;height:24px"></div>
<svg class="i" style="left:578px;top:113px" width="16" height="16" viewBox="0 0 16 16"><text x="1.5" y="14.5" font-size="18" fill="#000" font-family="Liberation Sans,sans-serif" >A</text></svg>
<svg class="i" style="left:601px;top:113px" width="16" height="16" viewBox="0 0 16 16"><text x="-0.5" y="13" font-size="17" fill="#000" font-family="Liberation Sans,sans-serif" >A</text><path d="M13.500 1v14M11.500 1h4M11.500 15h4" stroke="#2a5ea8" stroke-width="1.200" fill="none"/></svg>
<svg class="i" style="left:624px;top:113px" width="16" height="16" viewBox="0 0 16 16"><text x="-1" y="15" font-size="16" fill="#000" font-family="Liberation Sans,sans-serif" font-style="italic">A</text><path d="M14 1.500l-6 11" stroke="#e8b020" stroke-width="2.600"/><path d="M8 12.500l-1 3 2.500-1.800z" fill="#302010"/><path d="M14.800 0l-1.200 2.200" stroke="#f09090" stroke-width="2.600"/></svg>
<svg class="i" style="left:647px;top:113px" width="16" height="16" viewBox="0 0 16 16"><circle cx="6" cy="6" r="5.300" fill="url(#ggl)" stroke="#6a7690" stroke-width="1.200"/><text x="2.300" y="8" font-size="6.500" fill="#173d7a" font-family="Liberation Sans,sans-serif">ab</text><path d="M9.800 9.800l4.500 5" stroke="#c07838" stroke-width="2.200" stroke-linecap="round"/><text x="12.500" y="8" font-size="6.500" fill="#000" font-family="Liberation Sans,sans-serif">c</text></svg>
<svg class="i" style="left:670px;top:113px" width="16" height="16" viewBox="0 0 16 16"><text x="0" y="14" font-size="17" fill="#000" font-family="Liberation Sans,sans-serif" >A</text><path d="M15 6l-4 5" stroke="#b8784a" stroke-width="2.200" stroke-linecap="round"/><path d="M12.500 9l-1.500 2" stroke="#5a8ac0" stroke-width="2.200"/><path d="M11 10.500l-2 2-4 2.500 1 .5 5-1.500 1.500-2.500z" fill="#202020"/></svg>
<svg class="i" style="left:693px;top:113px" width="16" height="16" viewBox="0 0 16 16"><path d="M3 0.500h12.500v12.500" fill="#dfe9f6" stroke="#2a5ea8" stroke-width="1"/><rect x="1" y="5" width="10" height="10" fill="#eef3fa" stroke="#000" stroke-width="1.200" stroke-dasharray="1.200 1.200"/><text x="2.500" y="14" font-size="10" fill="#000" font-family="Liberation Sans,sans-serif">A</text></svg>
<svg class="i" style="left:716px;top:113px" width="16" height="16" viewBox="0 0 16 16"><rect x="1.500" y="0.500" width="13" height="14" fill="#dfe9f6" stroke="#2a5ea8" stroke-width="1.200"/><text x="2" y="13" font-size="15" fill="#000" font-family="Liberation Sans,sans-serif" >A</text><rect x="0" y="13" width="3" height="3" fill="#173d7a"/><rect x="13.500" y="5" width="2.500" height="3" fill="#173d7a"/></svg>
<svg class="i" style="left:739px;top:113px" width="16" height="16" viewBox="0 0 16 16"><rect x="0.500" y="0" width="15.500" height="3" fill="#f0c818"/><path d="M2 0v2M4 0v2M6 0v2M8 0v2M10 0v2M12 0v2M14 0v2" stroke="#806000" stroke-width=".6"/><path d="M2.500 3.500v11h12" fill="none" stroke="#2a5ea8" stroke-width="1.300"/><path d="M0.500 12.500l2 3 2.500-2.500z" fill="#2a5ea8"/><path d="M6 6.500v3.500h3" fill="none" stroke="#000" stroke-width="1"/><path d="M14.500 5l-4 8" stroke="#000" stroke-width="1.300"/><path d="M15 4l.3 3.500-2.700-1.300zM10 14l-.3-3.500 2.700 1.300z" fill="#000"/><path d="M13 10.500h3" stroke="#2a5ea8" stroke-width="1"/></svg>
<div class="tb" style="left:0;top:134px;width:25px;height:435px;border-top:none"></div>
<div class="gh" style="left:3px;top:136px;width:18px"></div><div class="gh" style="left:3px;top:140px;width:18px"></div>
<svg class="i" style="left:4px;top:148px" width="16" height="16" viewBox="0 0 16 16"><path d="M1.500 12.500l11.500-10.500" stroke="#000" stroke-width="1.300"/><rect x="0.5" y="11.2" width="2.6" height="2.6" fill="#1c7ae0"/><rect x="12.2" y="0.5" width="2.6" height="2.6" fill="#1c7ae0"/></svg>
<svg class="i" style="left:4px;top:170px" width="16" height="16" viewBox="0 0 16 16"><path d="M1.500 14l13-12" stroke="#000" stroke-width="1.300"/><path d="M0.500 15l1.200-4 2.700 2.900zM15.500 1l-1.200 4-2.700-2.900z" fill="#000"/><rect x="6.8999999999999995" y="6.5" width="2.6" height="2.6" fill="#1c7ae0"/></svg>
<svg class="i" style="left:4px;top:192px" width="16" height="16" viewBox="0 0 16 16"><path d="M1.500 11.500h9c6 0 6-7 0-7" fill="none" stroke="#000" stroke-width="1.300"/><rect x="0.5" y="10.2" width="2.6" height="2.6" fill="#1c7ae0"/><rect x="9.2" y="10.2" width="2.6" height="2.6" fill="#1c7ae0"/><rect x="9.2" y="2.9000000000000004" width="2.6" height="2.6" fill="#1c7ae0"/></svg>
<svg class="i" style="left:4px;top:214px" width="16" height="16" viewBox="0 0 16 16"><path d="M8 1.500l6.500 4.800-2.500 7.700h-8l-2.500-7.700z" fill="url(#gcu)" stroke="#000" stroke-width="1.300"/></svg>
<svg class="i" style="left:4px;top:236px" width="16" height="16" viewBox="0 0 16 16"><path d="M1.500 5.500l12.500-1v8.500h-12.500z" fill="url(#gcu)" stroke="#000" stroke-width="1.300"/><rect x="12.7" y="2.5" width="2.6" height="2.6" fill="#1c7ae0"/><rect x="0.5" y="11.5" width="2.6" height="2.6" fill="#1c7ae0"/></svg>
<svg class="i" style="left:4px;top:258px" width="16" height="16" viewBox="0 0 16 16"><path d="M1.500 14.500c0-7 5.500-12.500 12.500-12.500" fill="none" stroke="#000" stroke-width="1.300"/><rect x="0.5" y="12.899999999999999" width="2.6" height="2.6" fill="#1c7ae0"/><rect x="4.2" y="4.2" width="2.6" height="2.6" fill="#1c7ae0"/><rect x="12.7" y="0.7" width="2.6" height="2.6" fill="#1c7ae0"/></svg>
<svg class="i" style="left:4px;top:280px" width="16" height="16" viewBox="0 0 16 16"><circle cx="8" cy="8" r="6.800" fill="url(#gcu)" stroke="#000" stroke-width="1.400"/><path d="M8 8l5-5" stroke="#000" stroke-width="1.200"/><rect x="6.7" y="6.8999999999999995" width="2.6" height="2.6" fill="#1c7ae0"/></svg>
<svg class="i" style="left:4px;top:302px" width="16" height="16" viewBox="0 0 16 16"><path d="M3 2.500c2-2.500 5-1 5 .5 1.500-2 5-.5 4 2.500 3 1 2.500 4.500 0 5 1 3-3 4.500-4.500 2-2 2-5 0-4-2.500-3.500 0-3.500-4.500-.5-5-1-1.500-.5-2.500 0-2.500z" fill="url(#gcu)" stroke="#000" stroke-width="1.400"/></svg>
<svg class="i" style="left:4px;top:324px" width="16" height="16" viewBox="0 0 16 16"><path d="M1 14.500c2-8 4-8 6.500-5.500s5 2 7.500-7" fill="none" stroke="#000" stroke-width="1.200"/></svg>
<svg class="i" style="left:4px;top:346px" width="16" height="16" viewBox="0 0 16 16"><ellipse cx="8" cy="8" rx="6.800" ry="4.300" fill="url(#gcu)" stroke="#000" stroke-width="1.400"/><rect x="0.19999999999999996" y="6.7" width="2.6" height="2.6" fill="#1c7ae0"/><rect x="13.2" y="6.7" width="2.6" height="2.6" fill="#1c7ae0"/><rect x="6.7" y="2.5" width="2.6" height="2.6" fill="#1c7ae0"/></svg>
<svg class="i" style="left:4px;top:368px" width="16" height="16" viewBox="0 0 16 16"><path d="M3 6.500c3-4 13-2.500 11.500 2.500-1 3-5 4-7.500 3" fill="url(#gcu)" stroke="#000" stroke-width="1.300"/><rect x="0.7" y="6.2" width="2.6" height="2.6" fill="#1c7ae0"/><rect x="6.7" y="11.2" width="2.6" height="2.6" fill="#1c7ae0"/></svg>
<svg class="i" style="left:4px;top:390px" width="16" height="16" viewBox="0 0 16 16"><path d="M6 0.500h6l3.500 3.500v8h-9.500z" fill="url(#gcu)" stroke="#9ab0d0" stroke-width=".8"/><rect x="2" y="4.500" width="7.500" height="5.500" fill="#e8e070" stroke="#173d7a" stroke-width="1"/><circle cx="9" cy="11.500" r="3.300" fill="#e8e070" stroke="#173d7a" stroke-width="1"/><rect x="0.19999999999999996" y="9.2" width="2.6" height="2.6" fill="#1c7ae0"/><path d="M16 12.500v3.500h-3.500z" fill="#000"/></svg>
<svg class="i" style="left:4px;top:412px" width="16" height="16" viewBox="0 0 16 16"><rect x="3.500" y="2.500" width="8" height="6" fill="#e8e070" stroke="#173d7a" stroke-width="1"/><circle cx="11" cy="11" r="3.600" fill="#e8e070" stroke="#173d7a" stroke-width="1"/><rect x="2.2" y="7.2" width="2.6" height="2.6" fill="#1c7ae0"/></svg>
<svg class="i" style="left:4px;top:434px" width="16" height="16" viewBox="0 0 16 16"><rect x="7.1" y="7.1" width="2.8" height="2.8" fill="#1c7ae0"/></svg>
<svg class="i" style="left:4px;top:456px" width="16" height="16" viewBox="0 0 16 16"><rect x="3.500" y="3.500" width="9" height="9" fill="#eaf0fa"/><path d="M3.500 6l6.500 6.500M3.500 9l3.500 3.500M5 3.500l7.500 7.500M8 3.500l4.500 4.500M11 3.500l1.500 1.500" stroke="#2a5ea8" stroke-width="1"/><path d="M3 0v16M13 0v16M0 3h16M0 13h16" stroke="#2a5ea8" stroke-width="1.500"/><path d="M11 15.500l4.500-7" stroke="#2a5ea8" stroke-width="1.200"/></svg>
<svg class="i" style="left:4px;top:478px" width="16" height="16" viewBox="0 0 16 16"><defs><linearGradient id="ggr" x1="0" y1="0" x2="1" y2="1"><stop offset="0" stop-color="#202860"/><stop offset="1" stop-color="#c8c060"/></linearGradient></defs><rect x="3.500" y="3.500" width="9" height="9" fill="url(#ggr)"/><path d="M3 0v16M13 0v16M0 3h16M0 13h16" stroke="#0c1430" stroke-width="1.400"/><path d="M11 15.500l4.500-7" stroke="#0c1430" stroke-width="1"/></svg>
<svg class="i" style="left:4px;top:500px" width="16" height="16" viewBox="0 0 16 16"><path d="M1 1.500h9l5.500 5v6.500h-14.500z" fill="url(#gcu)" stroke="#173d7a" stroke-width="1.300"/><circle cx="7.500" cy="7.500" r="2.800" fill="#fff" stroke="#5a78a8" stroke-width="1.300"/></svg>
<svg class="i" style="left:4px;top:522px" width="16" height="16" viewBox="0 0 16 16"><rect x="1.500" y="1.500" width="13" height="12" fill="#fff" stroke="#5a80c0" stroke-width="1"/><rect x="1.500" y="1.500" width="13" height="3" fill="#4a7ad0"/><path d="M1.500 7.500h13M1.500 10.500h13M5.800 4.500v9M10.200 4.500v9" stroke="#6a90d0" stroke-width="1.400"/></svg>
<svg class="i" style="left:4px;top:544px" width="16" height="16" viewBox="0 0 16 16"><text x="2.5" y="14.5" font-size="18" fill="#000" font-family="Liberation Sans,sans-serif" >A</text></svg>
<div class="tb" style="left:26px;top:134px;width:25px;height:391px;border-top:none"></div>
<div class="gh" style="left:29px;top:136px;width:18px"></div><div class="gh" style="left:29px;top:140px;width:18px"></div>
<svg class="i" style="left:30px;top:148px" width="16" height="16" viewBox="0 0 16 16"><path d="M0.500 14.500h15" stroke="#000" stroke-width="1"/><path d="M13.500 2l-9 9.500" stroke="#e8c020" stroke-width="4.200"/><path d="M14.500 0.500l-3.500 3.500" stroke="#f0e080" stroke-width="1"/><path d="M7.500 8.500l-2.200 2.500" stroke="#58a0a0" stroke-width="4.200"/><path d="M5.500 10.500l-1.500 1.800" stroke="#e86868" stroke-width="4.200" stroke-linecap="round"/><path d="M15 3.500l-8 9" stroke="#383838" stroke-width=".8"/></svg>
<svg class="i" style="left:30px;top:170px" width="16" height="16" viewBox="0 0 16 16"><circle cx="3.500" cy="4.500" r="2.800" fill="#d8e0ec" stroke="#303030" stroke-width="1.100"/><circle cx="9" cy="11" r="2.800" fill="#d8e0ec" stroke="#303030" stroke-width="1.100"/><circle cx="12" cy="12" r="2.800" fill="#d8e0ec" stroke="#303030" stroke-width="1.100"/><path d="M4.500 2.500c3-3 7-1.500 7.500 2.500" fill="none" stroke="#173d7a" stroke-width="1.500"/><path d="M9.500 4.500h5l-2.500 3.500z" fill="#173d7a"/></svg>
<svg class="i" style="left:30px;top:192px" width="16" height="16" viewBox="0 0 16 16"><path d="M6.500 3v10.500h-5.500zM9.500 3v10.500h5.500z" fill="url(#gcu)" stroke="#000" stroke-width="1.200"/><path d="M8 0v16" stroke="#1c7ae0" stroke-width="1.100"/></svg>
<svg class="i" style="left:30px;top:214px" width="16" height="16" viewBox="0 0 16 16"><path d="M15 14.500h-11c-4 0-4-5.500 0-5.500h1.500c-2-4 1-7.500 4-7.500s4.500 3 3.500 5" fill="none" stroke="#000" stroke-width="1.200"/><path d="M15 12h-10.500c-1.500 0-1.500-1.500 0-1.500h3.500c-2-3.500-.5-6.500 1.500-6.500 2.500 0 3 3 2 5h3.500" fill="none" stroke="#1c7ae0" stroke-width="1.200"/></svg>
<svg class="i" style="left:30px;top:236px" width="16" height="16" viewBox="0 0 16 16"><rect x="1" y="1" width="5.500" height="5.500" fill="url(#gcu)" stroke="#000" stroke-width="1.200"/><rect x="9.500" y="1" width="5.500" height="5.500" fill="url(#gcu)" stroke="#000" stroke-width="1.200"/><rect x="1" y="9.500" width="5.500" height="5.500" fill="url(#gcu)" stroke="#000" stroke-width="1.200"/><rect x="9.500" y="9.500" width="5.500" height="5.500" fill="url(#gcu)" stroke="#000" stroke-width="1.200"/></svg>
<svg class="i" style="left:30px;top:258px" width="16" height="16" viewBox="0 0 16 16"><path d="M8 2v12M2 8h12" stroke="#3a66a8" stroke-width="2"/><path d="M8 0l3 3.500h-6zM8 16l3-3.500h-6zM0 8l3.500-3v6zM16 8l-3.500-3v6z" fill="#3a66a8"/></svg>
<svg class="i" style="left:30px;top:280px" width="16" height="16" viewBox="0 0 16 16"><path d="M5 3.500a5.800 5.800 0 1 0 6 0" fill="none" stroke="#3a66a8" stroke-width="1.800"/><path d="M2.500 0.500l5 .5-2 5z" fill="#3a66a8"/></svg>
<svg class="i" style="left:30px;top:302px" width="16" height="16" viewBox="0 0 16 16"><path d="M1 0.500h14.500v15h-6" fill="url(#gcu)" stroke="#2a5ea8" stroke-width="1"/><rect x="0.800" y="6.800" width="8.400" height="8.400" fill="#eef3fa" stroke="#000" stroke-width="1.300" stroke-dasharray="1.300 1.100"/></svg>
<svg class="i" style="left:30px;top:324px" width="16" height="16" viewBox="0 0 16 16"><path d="M8.500 0.500l7 15h-7z" fill="url(#gcu)" stroke="#2a5ea8" stroke-width="1"/><path d="M6 1h-5v14h5" fill="#eef3fa" stroke="#000" stroke-width="1.400"/><path d="M6.500 1v14" stroke="#000" stroke-width="1.100" stroke-dasharray="1.200 1.200"/></svg>
<svg class="i" style="left:30px;top:346px" width="16" height="16" viewBox="0 0 16 16"><path d="M0.500 8.500h6" stroke="#000" stroke-width="1.300"/><path d="M9 8.500h7" stroke="#1c7ae0" stroke-width="1.100" stroke-dasharray="1.800 1.200"/><path d="M10.500 2.500l-5.500 11.500" stroke="#1c7ae0" stroke-width="1.300"/></svg>
<svg class="i" style="left:30px;top:368px" width="16" height="16" viewBox="0 0 16 16"><path d="M0.500 8.500h5" stroke="#000" stroke-width="1.300"/><path d="M6 8.500h5" stroke="#1c7ae0" stroke-width="1.100" stroke-dasharray="1.800 1.200"/><path d="M15.500 2.500l-5.500 11.500" stroke="#1c7ae0" stroke-width="1.300"/></svg>
<svg class="i" style="left:30px;top:390px" width="16" height="16" viewBox="0 0 16 16"><rect x="1" y="3" width="14" height="10.500" fill="url(#gcu)" stroke="#000" stroke-width="1.300"/><rect x="9" y="1.500" width="3" height="3" fill="#4a78b8"/></svg>
<svg class="i" style="left:30px;top:412px" width="16" height="16" viewBox="0 0 16 16"><rect x="1" y="3" width="14" height="10.500" fill="url(#gcu)" stroke="#000" stroke-width="1.300"/><rect x="5" y="2.200" width="6" height="1.800" fill="#ece9d8"/><rect x="3" y="1.500" width="3" height="3" fill="#4a78b8"/><rect x="10.500" y="1.500" width="3" height="3" fill="#4a78b8"/></svg>
<svg class="i" style="left:30px;top:434px" width="16" height="16" viewBox="0 0 16 16"><path d="M0 8h16" stroke="#000" stroke-width="1.600"/><path d="M3.500 4.500l4.500 3.500-4.500 3.500zM12.500 4.500l-4.500 3.500 4.500 3.500z" fill="#173d7a"/></svg>
<svg class="i" style="left:30px;top:456px" width="16" height="16" viewBox="0 0 16 16"><path d="M1 2.500h4" stroke="#000" stroke-width="1" stroke-dasharray="1 1"/><path d="M1.500 2.500v5" stroke="#000" stroke-width="1" stroke-dasharray="1 1"/><path d="M1.500 16v-7.500M7.500 2.500h8.500" stroke="#000" stroke-width="1.300"/><path d="M1.500 9.500l7-7" stroke="#1c7ae0" stroke-width="1.500"/></svg>
<svg class="i" style="left:30px;top:478px" width="16" height="16" viewBox="0 0 16 16"><path d="M1 2.500h4" stroke="#000" stroke-width="1" stroke-dasharray="1 1"/><path d="M1.500 2.500v5" stroke="#000" stroke-width="1" stroke-dasharray="1 1"/><path d="M1.500 16v-6M9 2.500h7" stroke="#000" stroke-width="1.300"/><path d="M1.500 10.500c0-5 3-8 8-8" fill="none" stroke="#1c7ae0" stroke-width="1.700"/></svg>
<svg class="i" style="left:30px;top:500px" width="16" height="16" viewBox="0 0 16 16"><path d="M7 1.500l1 3.500 3-2.500-1 3.500 4 0-3.500 2 3 3.500-4-1 0 4-2.500-3.500-2.500 2.500 .5-4-4 0 3.500-2-3-3.500 4 1z" fill="#f8dc28"/><path d="M1.500 13l5-5.500 3 2.500-5 5.500c-2.500 1-4-1-3-2.500z" fill="#d82020"/><path d="M3 13l4-4.500" stroke="#ff8080" stroke-width="1"/><path d="M8 6.500l4.500-4.500" stroke="#202020" stroke-width="1.500"/><path d="M13.500 0l.6 1.700 1.700.6-1.700.6-.6 1.700-.6-1.700-1.700-.6 1.700-.6z" fill="#b8d0f0"/><path d="M11 4l2 1M12 3l1 2" stroke="#d8e4f8" stroke-width=".6"/></svg>
<div style="left:52px;top:134px;width:1388px;height:636px;box-sizing:border-box;border:1px solid;border-color:#aca899 #fff #fff #aca899"></div>
<div id="canvas" style="left:53px;top:135px;width:1386px;height:634px;box-sizing:border-box;border:1px solid;border-color:#716f64 #f1efe2 #f1efe2 #716f64;background:#fff"></div>
<svg id="drawing" style="left:54px;top:136px" width="1384" height="632" viewBox="54 136 1384 632" font-family="Liberation Sans, sans-serif" fill="#000" font-kerning="none">
<path d="M589 344.5h1M626 376.5h1M448 339.5h1M844 369.5h1M472 358.5h1M722 338.5h1M889 367.5h1M533 337.5h1M468 362.5h1M638 339.5h1M547 340.5h1M706 362.5h1M454 371.5h1M487 349.5h1M746 375.5h1M722 338.5h1M719 372.5h1M627 338.5h1M537 337.5h1M709 343.5h1M572 361.5h1M497 369.5h1M484 371.5h1M581 370.5h1M841 378.5h1M516 341.5h1M721 371.5h1M751 347.5h1M614 341.5h1M704 380.5h1M456 371.5h1M454 374.5h1M529 366.5h1M772 369.5h1M642 355.5h1M662 372.5h1M896 364.5h1M609 354.5h1M551 346.5h1M781 350.5h1M465 371.5h1M577 368.5h1M677 356.5h1M797 363.5h1M571 373.5h1M461 342.5h1M686 361.5h1M508 383.5h1M599 344.5h1M901 366.5h1M639 337.5h1M916 377.5h1M463 383.5h1M709 371.5h1M828 355.5h1M598 379.5h1M603 373.5h1M678 372.5h1M832 364.5h1M459 340.5h1M907 352.5h1M666 379.5h1M764 339.5h1M455 381.5h1M783 354.5h1M755 371.5h1M772 363.5h1M569 380.5h1M621 377.5h1M601 336.5h1M905 364.5h1M605 345.5h1M736 342.5h1M676 338.5h1M535 353.5h1M490 382.5h1M550 360.5h1M624 366.5h1M465 345.5h1M653 360.5h1M705 352.5h1M876 343.5h1M843 362.5h1M866 370.5h1M566 380.5h1M636 357.5h1M773 359.5h1M914 349.5h1M501 340.5h1M514 344.5h1M542 377.5h1M543 335.5h1M672 372.5h1M517 351.5h1M568 335.5h1M498 361.5h1M697 358.5h1M736 371.5h1M587 343.5h1M777 367.5h1M910 374.5h1M759 378.5h1M802 338.5h1M657 378.5h1M832 370.5h1M624 360.5h1M628 360.5h1M477 365.5h1M748 360.5h1M455 347.5h1M458 348.5h1M649 345.5h1M480 356.5h1M731 338.5h1M476 335.5h1M714 344.5h1M698 341.5h1M909 358.5h1M738 336.5h1M460 348.5h1M738 359.5h1M500 375.5h1M553 357.5h1M732 358.5h1M666 342.5h1M483 366.5h1M662 365.5h1M671 354.5h1M467 344.5h1M476 382.5h1M599 382.5h1M559 365.5h1M848 379.5h1M506 368.5h1M435 348.5h1M910 368.5h1M609 344.5h1M777 369.5h1M892 336.5h1M812 368.5h1M576 376.5h1M866 340.5h1M780 351.5h1M689 358.5h1M889 345.5h1M606 349.5h1M696 369.5h1M822 367.5h1M592 375.5h1M538 374.5h1M839 383.5h1M860 347.5h1M836 350.5h1M842 360.5h1M802 349.5h1M526 368.5h1M676 357.5h1M798 336.5h1M438 352.5h1M665 351.5h1M523 379.5h1M733 357.5h1M652 381.5h1M602 358.5h1M465 349.5h1M476 349.5h1M664 347.5h1M596 348.5h1M671 374.5h1M884 374.5h1M854 335.5h1M669 376.5h1M600 376.5h1M467 377.5h1M485 359.5h1M824 380.5h1M808 347.5h1M668 346.5h1M646 375.5h1M594 340.5h1M834 381.5h1M626 364.5h1M629 382.5h1M908 340.5h1M795 345.5h1M511 343.5h1M438 344.5h1M726 364.5h1M836 376.5h1M498 374.5h1M847 373.5h1M666 377.5h1M903 357.5h1M503 370.5h1M704 343.5h1M434 335.5h1M833 381.5h1M756 341.5h1M693 382.5h1M902 343.5h1M646 347.5h1M846 348.5h1M438 351.5h1M532 353.5h1M680 350.5h1M815 372.5h1M590 351.5h1M702 361.5h1M851 343.5h1M455 382.5h1M605 364.5h1M763 372.5h1M841 368.5h1M639 367.5h1M490 369.5h1M501 368.5h1M685 336.5h1M870 363.5h1M821 346.5h1M735 335.5h1M821 344.5h1M512 344.5h1M666 374.5h1M795 342.5h1M708 338.5h1M590 378.5h1M689 368.5h1M708 365.5h1M825 341.5h1M876 370.5h1M453 350.5h1M521 352.5h1M445 341.5h1M683 363.5h1M711 336.5h1M813 339.5h1M650 355.5h1M737 367.5h1M734 367.5h1M526 379.5h1M565 363.5h1M684 369.5h1M837 365.5h1M683 350.5h1M781 368.5h1M872 351.5h1M896 370.5h1M881 347.5h1M854 363.5h1M494 361.5h1M486 360.5h1M650 355.5h1M461 377.5h1M547 362.5h1M461 348.5h1M766 354.5h1M825 342.5h1M883 344.5h1M905 380.5h1M753 377.5h1M611 344.5h1M553 343.5h1M663 349.5h1M806 341.5h1M627 366.5h1M507 377.5h1M850 349.5h1M506 380.5h1M644 367.5h1M630 356.5h1M639 347.5h1M606 355.5h1M471 381.5h1M611 336.5h1M597 370.5h1M658 363.5h1M784 336.5h1M620 356.5h1M688 374.5h1M575 367.5h1M915 339.5h1M481 349.5h1M872 341.5h1M467 351.5h1M563 337.5h1M887 346.5h1M562 383.5h1M490 362.5h1M858 378.5h1M843 351.5h1M631 344.5h1M698 367.5h1M716 366.5h1M782 355.5h1M469 352.5h1M453 379.5h1M517 362.5h1M882 339.5h1M561 336.5h1M748 340.5h1M834 351.5h1M466 373.5h1M862 349.5h1M458 351.5h1M865 342.5h1M656 335.5h1M597 370.5h1M637 352.5h1M742 343.5h1M446 368.5h1M787 350.5h1M904 342.5h1M506 351.5h1M449 346.5h1M527 354.5h1M745 354.5h1M695 383.5h1M529 353.5h1M652 367.5h1M768 346.5h1M562 357.5h1M835 336.5h1M552 337.5h1M431 336.5h1M799 367.5h1M706 347.5h1M687 365.5h1M549 363.5h1M478 377.5h1M843 376.5h1M645 377.5h1M677 369.5h1M851 360.5h1M683 354.5h1M776 348.5h1M541 356.5h1M525 380.5h1M797 375.5h1M495 360.5h1M601 338.5h1M852 343.5h1M431 339.5h1M744 382.5h1M874 351.5h1M644 345.5h1M452 340.5h1M764 359.5h1M869 367.5h1M767 353.5h1M730 350.5h1M778 353.5h1M447 364.5h1M518 345.5h1M561 363.5h1M425 351.5h1M610 356.5h1M704 355.5h1M549 337.5h1M875 354.5h1M535 357.5h1M517 335.5h1M595 359.5h1M466 365.5h1M566 367.5h1M759 347.5h1M551 367.5h1M821 335.5h1M470 351.5h1M842 340.5h1M497 360.5h1M724 337.5h1M625 336.5h1M577 354.5h1M746 349.5h1M467 372.5h1M914 368.5h1M860 383.5h1M503 377.5h1M881 380.5h1M825 373.5h1M623 383.5h1M590 381.5h1M677 344.5h1M569 381.5h1M740 376.5h1M498 337.5h1M846 380.5h1M880 367.5h1M745 362.5h1M799 379.5h1M839 367.5h1M495 368.5h1M809 367.5h1M715 336.5h1M847 378.5h1M723 380.5h1M773 379.5h1M753 349.5h1M467 336.5h1M445 343.5h1M750 358.5h1M915 341.5h1M616 363.5h1M709 338.5h1M745 336.5h1M744 369.5h1M772 350.5h1M674 351.5h1M425 364.5h1M832 339.5h1M807 367.5h1M883 369.5h1M471 377.5h1M693 339.5h1M805 382.5h1M666 351.5h1M838 339.5h1M857 351.5h1M544 381.5h1M811 348.5h1M542 382.5h1M756 364.5h1M676 359.5h1M463 365.5h1M890 378.5h1M571 337.5h1M739 375.5h1M753 347.5h1M463 373.5h1M499 356.5h1M554 376.5h1M804 379.5h1M579 374.5h1M714 343.5h1M430 365.5h1M455 366.5h1M561 378.5h1M474 379.5h1M535 378.5h1M674 353.5h1M786 368.5h1M570 364.5h1M662 364.5h1M816 342.5h1M881 370.5h1M526 354.5h1M467 365.5h1M432 353.5h1M658 339.5h1M843 367.5h1M654 352.5h1M622 348.5h1M893 348.5h1M462 372.5h1M470 344.5h1M806 368.5h1M558 358.5h1M491 373.5h1M843 375.5h1M684 352.5h1M878 342.5h1M784 358.5h1M542 366.5h1M883 366.5h1M625 336.5h1M505 335.5h1M910 366.5h1M772 363.5h1M631 354.5h1M796 344.5h1M637 357.5h1M616 355.5h1M485 356.5h1M424 355.5h1M808 356.5h1M853 360.5h1M485 347.5h1M789 335.5h1M885 382.5h1M572 351.5h1M614 339.5h1M625 359.5h1M869 372.5h1M463 358.5h1M897 362.5h1M810 352.5h1M861 338.5h1M567 341.5h1M450 377.5h1M570 375.5h1M903 344.5h1M551 352.5h1M647 367.5h1M585 347.5h1M819 358.5h1M825 362.5h1M876 336.5h1M839 383.5h1M747 360.5h1M891 370.5h1M705 348.5h1M792 340.5h1M449 381.5h1M634 363.5h1M738 383.5h1M494 376.5h1M869 353.5h1M672 338.5h1M890 370.5h1M489 345.5h1M665 361.5h1M599 353.5h1M576 351.5h1M802 382.5h1M758 351.5h1M631 376.5h1M546 354.5h1M671 370.5h1M766 360.5h1M485 345.5h1M753 345.5h1M462 348.5h1M680 366.5h1M705 349.5h1M655 356.5h1M812 363.5h1M642 343.5h1M704 347.5h1M548 340.5h1M513 356.5h1M708 340.5h1M587 350.5h1M612 351.5h1M838 371.5h1M527 336.5h1M807 361.5h1M620 361.5h1M805 368.5h1M531 359.5h1M562 356.5h1M809 338.5h1M679 352.5h1M718 358.5h1M488 378.5h1M681 368.5h1M746 348.5h1M471 352.5h1M883 350.5h1M620 360.5h1M754 363.5h1M645 354.5h1M858 336.5h1M489 337.5h1M641 380.5h1M815 365.5h1M724 366.5h1M424 339.5h1M624 368.5h1M861 364.5h1M653 350.5h1M824 341.5h1M538 344.5h1M501 368.5h1M773 341.5h1M906 381.5h1M782 376.5h1M857 383.5h1M882 364.5h1M467 370.5h1M821 337.5h1M424 343.5h1M543 371.5h1M894 337.5h1M754 380.5h1M579 343.5h1M744 351.5h1M694 375.5h1M647 379.5h1M815 342.5h1M474 339.5h1M577 368.5h1M907 372.5h1M522 359.5h1M557 349.5h1M828 373.5h1M424 335.5h1M699 354.5h1M659 352.5h1M914 355.5h1M754 350.5h1M667 368.5h1M544 370.5h1M550 336.5h1M915 361.5h1M784 376.5h1M581 338.5h1M435 347.5h1M679 378.5h1M755 361.5h1M465 351.5h1M540 377.5h1M641 358.5h1M540 366.5h1M441 379.5h1M597 380.5h1M639 358.5h1M773 360.5h1M525 335.5h1M832 353.5h1M802 367.5h1M458 348.5h1M677 347.5h1M583 347.5h1M542 364.5h1M537 351.5h1M813 353.5h1M479 374.5h1M677 374.5h1M519 349.5h1M672 361.5h1M890 377.5h1M452 373.5h1M498 360.5h1M451 348.5h1M436 373.5h1M496 361.5h1M450 380.5h1M454 346.5h1M625 363.5h1M883 380.5h1M876 355.5h1M799 342.5h1M464 345.5h1M592 347.5h1M518 376.5h1M903 368.5h1M806 364.5h1M440 354.5h1M764 381.5h1M617 358.5h1M593 363.5h1M510 341.5h1M425 340.5h1M567 340.5h1M603 361.5h1M913 342.5h1M711 383.5h1M530 359.5h1M606 354.5h1M844 362.5h1M468 338.5h1M785 365.5h1M524 358.5h1M701 363.5h1M522 355.5h1M610 382.5h1M883 365.5h1M439 375.5h1M634 350.5h1M839 375.5h1M816 360.5h1M444 359.5h1M441 364.5h1M456 338.5h1M555 347.5h1M806 339.5h1M884 373.5h1M597 358.5h1M563 356.5h1M914 374.5h1M446 351.5h1M806 380.5h1M777 355.5h1M897 352.5h1M576 335.5h1M793 383.5h1M728 375.5h1M908 339.5h1M436 349.5h1M478 365.5h1M790 364.5h1M912 359.5h1M828 351.5h1M891 362.5h1M841 366.5h1M491 366.5h1M517 335.5h1M834 382.5h1M579 379.5h1M819 344.5h1M734 350.5h1M591 355.5h1M659 358.5h1M825 373.5h1M464 367.5h1M525 360.5h1M809 345.5h1M550 361.5h1M457 376.5h1M441 365.5h1" stroke="#000" stroke-width="1" fill="none" shape-rendering="crispEdges"/>
<g shape-rendering="crispEdges">
<rect x="421.500" y="332.500" width="497" height="53" fill="none" stroke="#000" stroke-width="3"/>
<path d="M504.500 386v335.500M835.500 386v335.500" stroke="#000" stroke-width="3" fill="none"/>
<path d="M471.500 344.500H449a14.500 14.500 0 0 0 0 29H891a14.500 14.500 0 0 0 0-29H868.500" fill="none" stroke="#000" stroke-width="5" stroke-linecap="round"/>
<path d="M421.500 332L669.600 199.500" fill="none" stroke="#000" stroke-width="1" stroke-dasharray="39.600 14.500 32.900 14.500 32.900 14.500 32.900 14.500 32.900 14.500 60"/><path d="M918.700 332L669.600 199.500" fill="none" stroke="#000" stroke-width="1" stroke-dasharray="39.600 14.500 32.900 14.500 32.900 14.500 32.900 14.500 32.900 14.500 60"/>
<path d="M366.500 182v167M349 199.500h68M349 332.500h68M421 199.500h1M404 455.500h117M421.500 391v82M818 455.500h118M918.500 391v82M487 617.500h365M470 721.500H635.500L649.500 752.500L663.500 690.500L679 721.500H874M891 342L965 251.500H1261M907 371.500L984 349.500H1334" fill="none" stroke="#000" stroke-width="1"/>
<path d="M410.5 466.0L432.5 445.0M493.5 466.0L515.5 445.0M824.5 466.0L846.5 445.0M907.5 466.0L929.5 445.0M493.5 628.0L515.5 607.0M824.5 628.0L846.5 607.0M355.5 189.0L377.5 210.0M355.5 322.0L377.5 343.0" fill="none" stroke="#000" stroke-width="3.600"/>
</g>
<text x="980" y="237" font-size="35" textLength="154.6" lengthAdjust="spacingAndGlyphs" >Арматура</text>
<text x="1147.2" y="237" font-size="34" font-family="DejaVu Sans, sans-serif" fill="#2a2a2a">∅</text>
<text x="1173.5" y="237" font-size="35" >6</text>
<text x="1202.9" y="237" font-size="35" >S1</text>
<text x="985" y="339" font-size="35" textLength="329.6" lengthAdjust="spacingAndGlyphs" >Цементно-песчаный</text>
<text x="984.8" y="380" font-size="35" textLength="128.6" lengthAdjust="spacingAndGlyphs" >раствор</text>
<text x="432.1" y="451" font-size="35" textLength="58.7" lengthAdjust="spacingAndGlyphs" >250</text>
<text x="846.1" y="451" font-size="35" textLength="58.7" lengthAdjust="spacingAndGlyphs" >250</text>
<text x="609.1" y="612" font-size="35" textLength="119" lengthAdjust="spacingAndGlyphs" >В≤2000</text>
<text transform="translate(308 342.8) rotate(-90)" x="0" y="0" font-size="35" textLength="156.8" lengthAdjust="spacingAndGlyphs">4-5 рядов</text>
<text transform="translate(349 349.3) rotate(-90)" x="0" y="0" font-size="35" textLength="167.5" lengthAdjust="spacingAndGlyphs">кирпичной</text>
<text transform="translate(391 320.3) rotate(-90)" x="0" y="0" font-size="35" textLength="109.7" lengthAdjust="spacingAndGlyphs">кладки</text>
<path d="M63.500 569v72M54 604.500h45M60.500 601.500h6v6h-6z" fill="none" stroke="#000" stroke-width="1" shape-rendering="crispEdges"/>
<path d="M72.500 687v55M66.500 741.500h12v12h-12zM78.500 747.500h55" fill="none" stroke="#000" stroke-width="1" shape-rendering="crispEdges"/>
<path d="M72.500 671.500L67.500 687h10zM148.500 747.500L133.500 742.500v10z" fill="#fff" stroke="#000" stroke-width="1"/>
<path d="M69.500 675v12M75.500 675v12M72.500 672v15M137 744.500v6M141 745.500v4M133.500 747.500h14" stroke="#888" stroke-width=".7" fill="none"/>
<text x="68.200" y="660" font-size="23" textLength="12.900" lengthAdjust="spacingAndGlyphs" fill="#3c3c3c">Y</text><text x="161.700" y="755.400" font-size="21" textLength="12" lengthAdjust="spacingAndGlyphs" fill="#3c3c3c">X</text>
</svg>
<div style="left:0;top:770px;width:1440px;height:1px;background:#fff"></div>
<div style="left:0;top:774px;width:1440px;height:2px;background:linear-gradient(#4a4840 0,#4a4840 1px,#000 1px,#000 2px)"></div>
<div class="gv" style="left:6px;top:784px;height:57px"></div><div class="gv" style="left:10px;top:784px;height:57px"></div>
<div style="left:16px;top:785px;width:1418px;height:61px;box-sizing:border-box;border:1px solid;border-color:#aca899 #fff #fff #aca899"></div><div id="cmd" style="left:17px;top:786px;width:1416px;height:59px;box-sizing:border-box;background:#fff;border-left:1px solid #000;border-top:1px solid #000;border-right:1px solid #ece9d8;border-bottom:1px solid #ece9d8">
<span class="t " style="left:-0.60px;top:2.78px;font-size:13.33px;font-family:'Liberation Mono',monospace;">Команда: Противоположный угол:</span>
<span class="t " style="left:-0.60px;top:18.28px;font-size:13.33px;font-family:'Liberation Mono',monospace;">Команда: *Прервано*</span>
<div style="left:0;top:38px;width:1414px;height:1px;background:#8c8a80"></div>
<div style="left:0;top:39px;width:1414px;height:1px;background:#e4e2d8"></div>
<span class="t " style="left:-0.60px;top:43.28px;font-size:13.33px;font-family:'Liberation Mono',monospace;">Команда:</span>
<div style="left:1395px;top:0;width:19px;height:38px;background:#f6f5ef"></div>
<div style="left:1396px;top:1px;width:17px;height:17px;box-sizing:border-box;border:1px solid #dddbd0;border-radius:2px;background:linear-gradient(#fefefd,#f0efe8)"><svg class="i" style="left:3.0px;top:3.5px" width="9" height="8" viewBox="0 0 9 8"><path d="M1 6l3.500-3.500 3.500 3.500" fill="none" stroke="#4d6185" stroke-width="2"/></svg></div>
<div style="left:1396px;top:20px;width:17px;height:17px;box-sizing:border-box;border:1px solid #dddbd0;border-radius:2px;background:linear-gradient(#fefefd,#f0efe8)"><svg class="i" style="left:3.0px;top:3.5px" width="9" height="8" viewBox="0 0 9 8"><path d="M1 2l3.500 3.500 3.500-3.500" fill="none" stroke="#4d6185" stroke-width="2"/></svg></div>
<div style="left:1318px;top:40px;width:98px;height:19px;background:#ece9d8"></div>
<div style="left:1321px;top:40px;width:73px;height:17px;background:#f8f7f2"></div>
<div style="left:1321px;top:40px;width:18px;height:17px;box-sizing:border-box;border:1px solid #dddbd0;border-radius:2px;background:linear-gradient(#fefefd,#f0efe8)"><svg class="i" style="left:3.5px;top:3.5px" width="9" height="8" viewBox="0 0 9 8"><path d="M6 0.500l-3.500 3.500 3.500 3.500" fill="none" stroke="#4d6185" stroke-width="2"/></svg></div>
<div style="left:1340px;top:40px;width:17px;height:17px;box-sizing:border-box;border:1px solid #dddbd0;border-radius:2px;background:linear-gradient(#fefefd,#f0efe8)"><div style="left:4px;top:4px;width:7px;height:7px;background:repeating-linear-gradient(to right,#a8a69a 0,#a8a69a 1px,transparent 1px,transparent 2px)"></div></div>
<div style="left:1375px;top:40px;width:18px;height:17px;box-sizing:border-box;border:1px solid #dddbd0;border-radius:2px;background:linear-gradient(#fefefd,#f0efe8)"><svg class="i" style="left:3.5px;top:3.5px" width="9" height="8" viewBox="0 0 9 8"><path d="M3 0.500l3.500 3.500-3.500 3.500" fill="none" stroke="#4d6185" stroke-width="2"/></svg></div>
</div>
<div style="left:0;top:848px;width:1440px;height:1px;background:#fff"></div>
<div style="left:5px;top:851px;width:177px;height:18px;box-sizing:border-box;border:1px solid;border-color:#aca899 #fff #fff #aca899"></div>
<span class="t " style="left:7.00px;top:854.42px;font-size:12.5px;transform:scaleX(0.8627);">1067.4446, -1171.3511, 0.0000</span>
<div class="sb" style="left:186px;width:26px"></div>
<span class="t " style="left:187.90px;top:854.12px;font-size:12.5px;transform:scaleX(0.8545);">ШАГ</span>
<div class="sb" style="left:216px;width:39px"></div>
<span class="t " style="left:217.50px;top:854.12px;font-size:12.5px;transform:scaleX(0.8937);">СЕТКА</span>
<div class="sbp" style="left:259px;width:34px"></div>
<span class="t " style="left:261.90px;top:854.92px;font-size:12.5px;transform:scaleX(0.8442);">ОРТО</span>
<div class="sb" style="left:297px;width:68px"></div>
<span class="t " style="left:298.70px;top:854.12px;font-size:12.5px;transform:scaleX(0.8741);">ОТС-ПОЛЯР</span>
<div class="sbp" style="left:369px;width:64px"></div>
<span class="t " style="left:372.00px;top:854.92px;font-size:12.5px;transform:scaleX(0.8946);">ПРИВЯЗКА</span>
<div class="sbp" style="left:436px;width:73px"></div>
<span class="t " style="left:439.20px;top:854.92px;font-size:12.5px;transform:scaleX(0.8441);">ОТС-ОБЪЕКТ</span>
<div class="sbp" style="left:513px;width:35px"></div>
<span class="t " style="left:516.20px;top:854.92px;font-size:12.5px;transform:scaleX(0.9213);">ДПСК</span>
<div class="sbp" style="left:552px;width:29px"></div>
<span class="t " style="left:555.20px;top:854.92px;font-size:12.5px;transform:scaleX(0.9480);">ДИН</span>
<div class="sbp" style="left:585px;width:26px"></div>
<span class="t " style="left:587.70px;top:854.92px;font-size:12.5px;transform:scaleX(0.8481);">ВЕС</span>
<svg class="i" style="left:615px;top:852px" width="18" height="16" viewBox="0 0 18 16"><defs><linearGradient id="gmd" x1="0" y1="0" x2="1" y2="1"><stop offset="0" stop-color="#1c1c1c"/><stop offset="1" stop-color="#8a8a8a"/></linearGradient></defs><rect x="0.500" y="0.500" width="17" height="15" fill="url(#gmd)" stroke="#2a2a2a"/><path d="M4 13v-8h11M8 13v-5h7" fill="none" stroke="#b8c060" stroke-width="1.200"/></svg>
<svg class="i" style="left:639px;top:852px" width="18" height="16" viewBox="0 0 18 16"><rect x="0.500" y="0.500" width="17" height="15" fill="#d4e0f0" stroke="#a8b4c8"/><path d="M6 0v16M12 0v16M0 5h18M0 11h18" stroke="#88a8e0" stroke-width="1.200"/><path d="M4 13l4.500-10 4 10z" fill="#6888b8" stroke="#48689c" stroke-width=".8"/></svg>
<svg class="i" style="left:664px;top:853px" width="8" height="14" viewBox="0 0 8 14"><path d="M1 6l6-5.500v5.500zM1 13l6-5.500v5.500z" fill="#000"/></svg>
<div style="left:1335px;top:851px;width:63px;height:18px;box-sizing:border-box;background:#f4f2e8;border:1px solid;border-color:#d8d5c4 #fff #fff #d8d5c4"></div>
<svg class="i" style="left:1340px;top:851px" width="17" height="17" viewBox="0 0 17 17"><path d="M2 1c3 1 6 5 6 9l-3 1c0-4-1-7-4-9z" fill="#98a8c8" stroke="#485888" stroke-width=".8"/><path d="M3 13h8M6 10v4" stroke="#485888" stroke-width="1.200"/><path d="M11 5l5.500 10h-11z" fill="#f8d820" stroke="#806000" stroke-width=".8"/><path d="M11 8.500v3.500M11 13v1.200" stroke="#000" stroke-width="1.300"/></svg>
<svg class="i" style="left:1358px;top:851px" width="17" height="17" viewBox="0 0 17 17"><path d="M8 8v-3.500c0-4.500 6.500-4.500 6.500 0v1.500" fill="none" stroke="#c89808" stroke-width="2"/><rect x="1.500" y="7.500" width="11" height="9" rx="1" fill="#f0c828" stroke="#806000" stroke-width=".9"/><path d="M2 10.500h10M2 13.500h10" stroke="#a87808" stroke-width=".9"/></svg>
<svg class="i" style="left:1378px;top:851px" width="17" height="17" viewBox="0 0 17 17"><rect x="0.500" y="1.500" width="11" height="14" fill="#3a64a8" stroke="#1c3c78"/><path d="M3 4.500h6M6 3v11M3.500 7l5 0" stroke="#fff" stroke-width="1.200"/><circle cx="12" cy="12" r="4.500" fill="#28b838" stroke="#fff" stroke-width=".8"/><path d="M9.800 12l1.700 1.800 2.800-3.300" fill="none" stroke="#fff" stroke-width="1.400"/></svg>
<svg class="i" style="left:1404px;top:861px" width="8" height="5" viewBox="0 0 8 5"><path d="M0 0h8l-4 4.500z" fill="#000"/></svg>
<div style="left:1420px;top:851px;width:17px;height:17px;box-sizing:border-box;border:2px solid #3a66a8;background:linear-gradient(135deg,#fff,#c8d8ec)"></div>
<div id="taskbar" style="left:0;top:870px;width:1440px;height:30px;background:linear-gradient(#a8a8a8 0,#8e8e8e 1px,#848484 2px,#484848 13px,#303030 15px,#000 16px,#000 30px)">
<svg class="i" style="left:12px;top:1px" width="42" height="29" viewBox="0 0 42 29"><defs><linearGradient id="orb" x1="0" y1="0" x2="1" y2="1"><stop offset="0" stop-color="#3a90d8"/><stop offset=".5" stop-color="#2878b0"/><stop offset="1" stop-color="#2f9a86"/></linearGradient><radialGradient id="orbh" cx=".5" cy=".05" r=".6"><stop offset="0" stop-color="#d8f4ff" stop-opacity=".6"/><stop offset="1" stop-color="#d8f4ff" stop-opacity="0"/></radialGradient></defs><circle cx="20" cy="19" r="18.300" fill="#081420"/><circle cx="20" cy="19" r="16.800" fill="url(#orb)"/><circle cx="20" cy="19" r="16.800" fill="url(#orbh)"/><path d="M14.500 12.500c2-1.200 4-1.200 6 0l-1.200 4.800c-2-1.200-4-1.200-6 0zM21.500 13c2 1.200 4 1.200 6 0l-1.200 4.800c-2 1.200-4 1.200-6 0zM12.800 18.800c2-1.200 4-1.200 6 0l-1.200 4.800c-2-1.200-4-1.200-6 0zM19.800 19.300c2 1.200 4 1.200 6 0l-1.200 4.800c-2 1.200-4 1.200-6 0z" fill="#cfe8f8" opacity=".8"/></svg>
<svg class="i" style="left:77px;top:6px" width="13" height="17" viewBox="0 0 13 17"><path d="M1 2l10-2 1 14-9 2.500z" fill="#8cb4f0" stroke="#4878c8" stroke-width=".8"/><path d="M3 3l7-1.200.3 3-7 1.300z" fill="#e8f0ff"/><path d="M3.500 8l6-1M3.800 10.500l6-1M4 13l6-1" stroke="#fff" stroke-width="1.300" stroke-dasharray="1.500 1"/><rect x="8.500" y="6.500" width="2" height="2" fill="#f08030"/></svg>
<svg class="i" style="left:99px;top:7px" width="17" height="17" viewBox="0 0 17 17"><circle cx="8.500" cy="8.500" r="8" fill="#c02020"/><circle cx="8.500" cy="8.500" r="6.800" fill="#f4e8e8"/><circle cx="8.500" cy="8.500" r="5.800" fill="#8a1010"/><path d="M4 10c0-2 1.500-2 2-4 .8 1.500 1.500 1 2-1.500 1 2 2 2 2.500 1 .5 1.500 2.500 2.500 2.500 4.500 0 3-9 3-9 0z" fill="#f08818"/><path d="M5.500 11c0-1.500 1.500-1.500 3-3 1 1.500 3 1.500 3 3 0 2-6 2-6 0z" fill="#f8d020"/></svg>
<div class="tk" style="left:127px;width:156px;"><svg class="i" style="left:7px;top:3px" width="17" height="15" viewBox="0 0 17 15"><path d="M0.500 2.500c0-1 .5-1.500 1.500-1.500h4l1.500 2h7c1 0 1.500.5 1.500 1.500v8c0 1-.5 1.500-1.500 1.500h-12.500c-1 0-1.500-.5-1.500-1.500z" fill="#e8b830" stroke="#a87810" stroke-width=".8"/><path d="M1 13l2.500-7.500h13l-2.500 8z" fill="#f8dc70" stroke="#c89820" stroke-width=".7"/></svg><span class="t " style="left:26.50px;top:4.57px;font-size:13.5px;color:#fff;transform:scaleX(0.8453);">АСК</span></div>
<div class="tk" style="left:287px;width:156px;"><svg class="i" style="left:7px;top:3px" width="17" height="17" viewBox="0 0 17 17"><path d="M4.500 0.500h8l3.500 3.500v12.500h-11.500z" fill="#f4f8ff" stroke="#7090c8" stroke-width=".8"/><path d="M7 7h7M7 9.500h7M7 12h7M7 14.500h7" stroke="#90a8d8" stroke-width=".8"/><rect x="0.500" y="2.500" width="9" height="9" fill="#2858b8" stroke="#fff" stroke-width=".7"/><text x="1.200" y="10.300" font-size="8.500" font-weight="bold" fill="#fff" font-family="Liberation Sans,sans-serif" textLength="7.600" lengthAdjust="spacingAndGlyphs">W</text></svg><span class="t " style="left:25.50px;top:4.57px;font-size:13.5px;color:#fff;transform:scaleX(0.8799);">ЭКЗАМЕНАЦИОНН...</span></div>
<div class="tk" style="left:446px;width:157px;"><svg class="i" style="left:7px;top:3px" width="17" height="17" viewBox="0 0 17 17"><path d="M4.500 0.500h8l3.500 3.500v12.500h-11.500z" fill="#f4f8ff" stroke="#7090c8" stroke-width=".8"/><path d="M7 7h7M7 9.500h7M7 12h7M7 14.500h7" stroke="#90a8d8" stroke-width=".8"/><rect x="0.500" y="2.500" width="9" height="9" fill="#2858b8" stroke="#fff" stroke-width=".7"/><text x="1.200" y="10.300" font-size="8.500" font-weight="bold" fill="#fff" font-family="Liberation Sans,sans-serif" textLength="7.600" lengthAdjust="spacingAndGlyphs">W</text></svg><span class="t " style="left:27.50px;top:4.57px;font-size:13.5px;color:#fff;transform:scaleX(0.9234);">ЛЕКЦИИ - Microso...</span></div>
<div class="tk" style="left:607px;width:157px;border-color:#8a8a8a;background:linear-gradient(#2a2a2a 0,#1a1a1a 45%,#050505 50%,#000 100%)"><svg class="i" style="left:8px;top:3px" width="17" height="17" viewBox="0 0 17 16"><rect x="0.500" y="0.500" width="16" height="15" fill="#1f9a88" stroke="#fff"/><text x="2.200" y="11" font-size="11" fill="#e8fff6" font-family="Liberation Sans,sans-serif">A</text><path d="M11.500 1v14M1 11.500h15" stroke="#fff" stroke-width="1"/><rect x="9.800" y="9.800" width="3.400" height="3.400" fill="#1f9a88" stroke="#fff" stroke-width=".9"/></svg><span class="t " style="left:27.50px;top:4.57px;font-size:13.5px;color:#fff;transform:scaleX(0.9483);">AutoCAD 2007 - [...</span></div>
<div style="left:1305px;top:7px;width:16px;height:16px;background:#1e98f0"></div>
<span class="t " style="left:1306.00px;top:9.34px;font-size:12px;color:#fff;transform:scaleX(0.8078);">RU</span>
<svg class="i" style="left:1336px;top:12px" width="9" height="9" viewBox="0 0 9 9"><circle cx="4.500" cy="4.500" r="4" fill="#5898c8"/><circle cx="3.500" cy="3.500" r="1.800" fill="#d8ecf8"/></svg>
<svg class="i" style="left:1351px;top:5px" width="18" height="18" viewBox="0 0 18 18"><ellipse cx="7" cy="8" rx="5.500" ry="6.500" fill="#888c90" transform="rotate(-25 7 8)"/><ellipse cx="6.500" cy="7.500" rx="3" ry="4" fill="#30343c" transform="rotate(-25 7 8)"/><path d="M11 16c2-1 4-3 5-6M9.500 13.500c1.500-.5 3-2 3.800-4" fill="none" stroke="#7068c8" stroke-width="1.200"/></svg>
<svg class="i" style="left:1369px;top:5px" width="17" height="17" viewBox="0 0 17 17"><defs><radialGradient id="av" cx=".4" cy=".3" r=".8"><stop offset="0" stop-color="#a8c8f0"/><stop offset="1" stop-color="#1c4c98"/></radialGradient></defs><circle cx="8.500" cy="8.500" r="8" fill="url(#av)"/><text x="4.500" y="13" font-size="13" font-weight="bold" fill="#fff" font-family="Liberation Serif,serif">a</text></svg>
<span class="t " style="left:1394.00px;top:8.07px;font-size:13.5px;color:#fff;transform:scaleX(0.9473);">10:53</span>
</div>
</body></html>
